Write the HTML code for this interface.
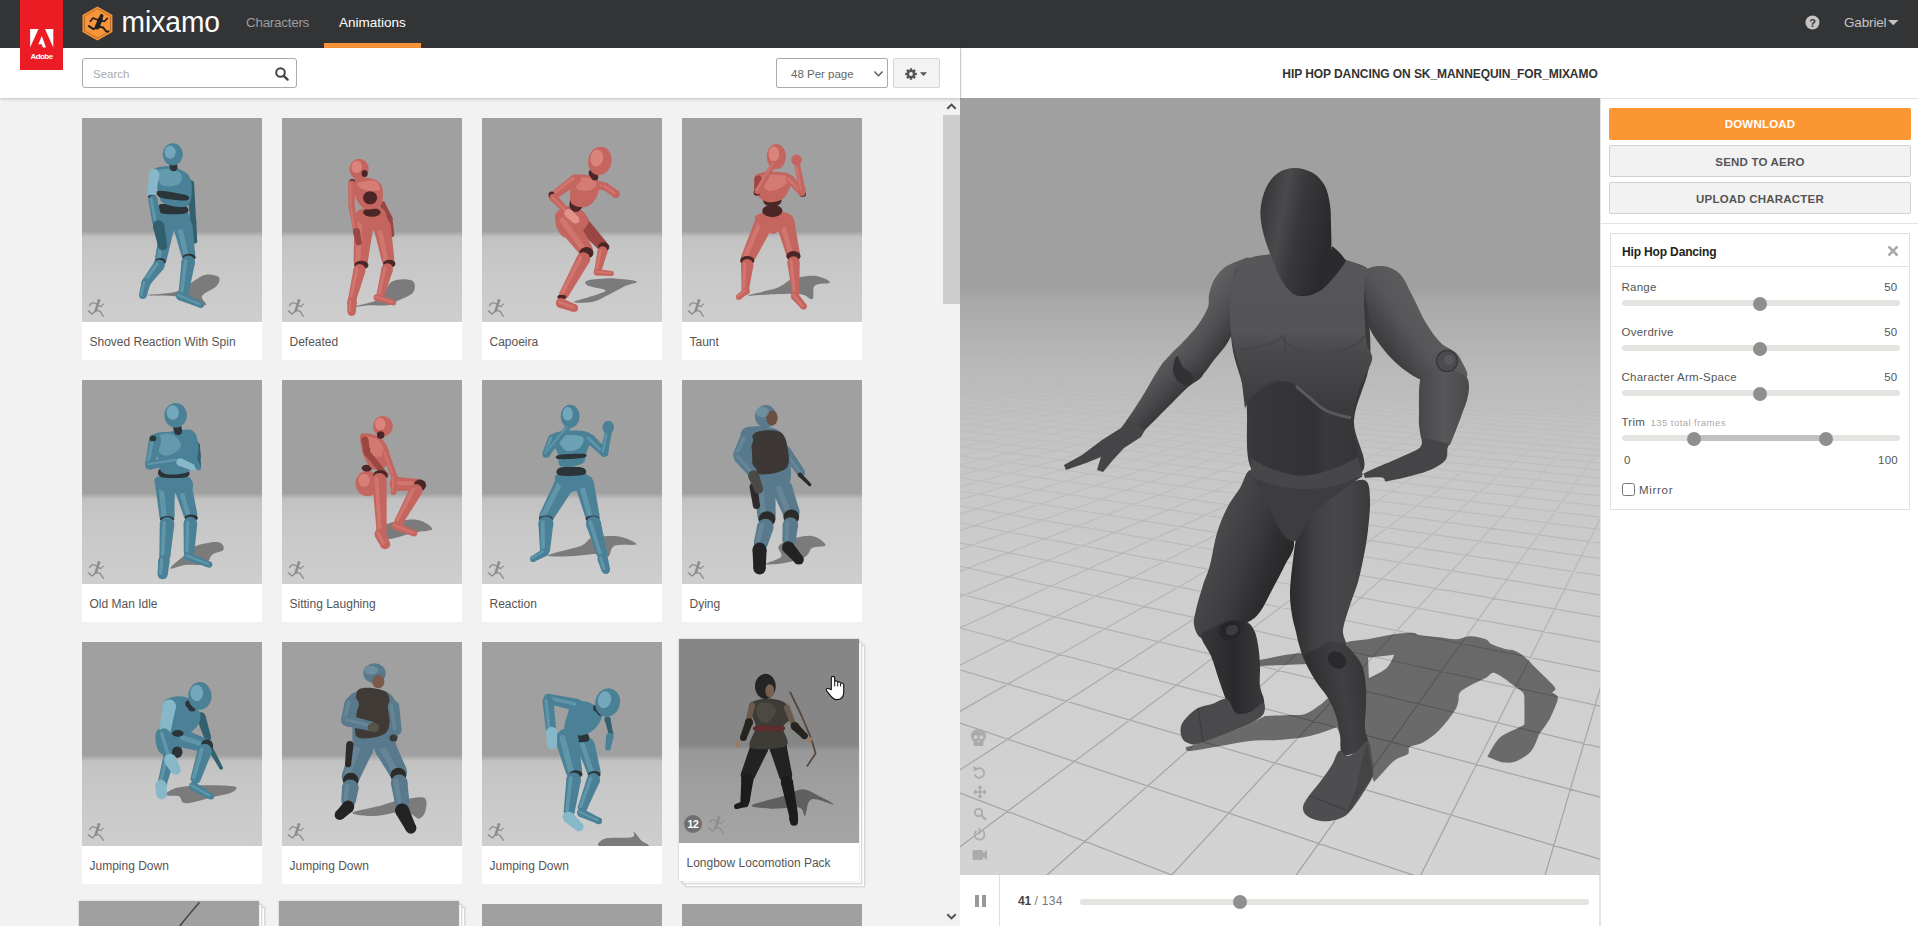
<!DOCTYPE html>
<html lang="en">
<head>
<meta charset="utf-8">
<title>Mixamo</title>
<style>
*{box-sizing:border-box;margin:0;padding:0}
html,body{width:1918px;height:926px;overflow:hidden;background:#f2f2f2;font-family:"Liberation Sans",sans-serif;color:#555}
.abs{position:absolute}
#hdr{position:absolute;left:0;top:0;width:1918px;height:48px;background:#333436}
#adobe{position:absolute;left:20px;top:0;width:43px;height:70px;background:#ec1c24;z-index:5}
#adobe span{position:absolute;left:0;width:43px;top:51.500px;text-align:center;color:#fff;font-weight:bold;font-size:8px;letter-spacing:-.55px;line-height:10px}
.nav{position:absolute;top:15px;font-size:13.5px;line-height:16px;color:#9b9b9b;white-space:nowrap}
#toolbarL{position:absolute;left:0;top:48px;width:960px;height:50px;background:#fff;box-shadow:0 1px 3px rgba(0,0,0,.22);z-index:3}
#toolbarR{position:absolute;left:960px;top:48px;width:958px;height:50px;background:#fff;border-left:1px solid #dcdcdc}
#search{position:absolute;left:82px;top:10px;width:215px;height:30px;border:1px solid #aaa;border-radius:3px;background:#fff}
#search span{position:absolute;left:10px;top:8.5px;font-size:11.5px;line-height:13px;color:#aaa}
#perpage{position:absolute;left:776px;top:10px;width:112px;height:30px;border:1px solid #a9a9a9;border-radius:2px;background:#fff}
#perpage span{position:absolute;left:14px;top:9px;font-size:11.5px;line-height:13px;color:#666}
#gear{position:absolute;left:893px;top:10px;width:47px;height:30px;border:1px solid #d4d4d4;border-radius:2px;background:#f3f3f3}
#title{position:absolute;left:0;top:19px;width:958px;text-align:center;font-weight:bold;font-size:12px;letter-spacing:-.07px;line-height:14px;color:#333;white-space:nowrap}
#left{position:absolute;left:0;top:98px;width:943px;height:828px;overflow:hidden;background:#f2f2f2}
#sb{position:absolute;left:943px;top:98px;width:17px;height:828px;background:#f1f1f1}
#sb i{position:absolute;left:0;top:17px;width:17px;height:189px;background:#cdcdcd}
.card{position:absolute;width:180px;height:242px;background:#fff}
.card .img{position:absolute;left:0;top:0;width:180px;height:204px;overflow:hidden;background:linear-gradient(#a0a0a0 0,#a0a0a0 55.5%,#c2c2c2 58.5%,#c7c7c7 70%,#cecece 100%)}
.card .lbl{position:absolute;left:7.5px;top:217px;font-size:12px;line-height:14px;color:#555;white-space:nowrap}
.card svg.fig{position:absolute;left:0;top:0;width:180px;height:204px}
.run{position:absolute;left:5px;top:180px;width:18px;height:19px}
.card.sheet{background:#fff;border:1px solid #d9d9d9;box-shadow:0 0 2px rgba(0,0,0,.15)}
.card.pk{box-shadow:0 0 2px rgba(0,0,0,.2)}
#viewer{position:absolute;left:960px;top:98px;width:640px;height:777px;overflow:hidden;background:#a0a0a0}
#play{position:absolute;left:960px;top:875px;width:640px;height:51px;background:#fff}
#side{position:absolute;left:1600px;top:98px;width:318px;height:828px;background:#fff;border-left:1px solid #e2e2e2}
.btn{position:absolute;left:8px;width:302px;height:32px;border-radius:2px;text-align:center;font-weight:bold;font-size:11.5px;line-height:32px;letter-spacing:.2px}
#panel{position:absolute;left:9px;top:135px;width:300px;height:277px;border:1px solid #e0e0e0;background:#fff}
.row{position:absolute;left:10.5px;width:276px;letter-spacing:.25px;white-space:nowrap;font-size:11.5px;line-height:14px;color:#555}
.row b{position:absolute;right:0;top:0;font-weight:normal}
.track{position:absolute;left:10.5px;width:278px;height:6px;border-radius:3px;background:#e3e3e0}
.knob{position:absolute;width:14px;height:14px;border-radius:50%;background:#8f8f8f}
</style>
</head>
<body>
<div id="hdr">
  <svg class="abs" style="left:80px;top:4px" width="36" height="40" viewBox="80 4 36 40">
    <polygon points="97.400,6.500 112.400,15.100 112.400,32 97.400,40.400 82.500,32 82.500,15.100" fill="#f7953a"/>
    <polygon points="97.400,8.700 110.500,16.200 110.500,30.900 97.400,38.200 84.400,30.900 84.400,16.200" fill="none" stroke="#a8601c" stroke-width=".8"/>
    <g stroke="#1f1f1f" fill="none" stroke-linecap="round" stroke-linejoin="round">
      <circle cx="101.600" cy="15.900" r="1.900" fill="#1f1f1f" stroke="none"/>
      <path d="M100.500 18.800L97.200 27" stroke-width="4.700"/>
      <path d="M98.800 20.200L93 18L90.400 21.300" stroke-width="1.700"/>
      <path d="M100.800 20.400L104.300 21.500L107.300 18.400" stroke-width="1.700"/>
      <path d="M97 27.200L93.500 29.200L88.900 26.100" stroke-width="2"/>
      <path d="M97.800 26.600L103.200 27.600L106.300 31.500L108.500 31.500" stroke-width="2"/>
    </g>
  </svg>
  <svg class="abs" style="left:118px;top:2px" width="110" height="40"><text x="3.5" y="30" font-family="Liberation Sans, sans-serif" font-size="30" fill="#fff" textLength="98.5" lengthAdjust="spacingAndGlyphs">mixamo</text></svg>
  <div class="nav" style="left:246px;letter-spacing:-.3px">Characters</div>
  <div class="nav" style="left:339px;color:#fff">Animations</div>
  <div class="abs" style="left:324px;top:43px;width:97px;height:5px;background:#f7943a"></div>
  <div class="nav" style="left:1844px;color:#c4c4c4;letter-spacing:-.15px">Gabriel</div>
  <svg class="abs" style="left:1805px;top:15px" width="15" height="15" viewBox="0 0 15 15"><circle cx="7.5" cy="7.5" r="7" fill="#c4c4c4"/><text x="7.5" y="11.600" font-family="Liberation Sans, sans-serif" font-weight="bold" font-size="11" text-anchor="middle" fill="#333436">?</text></svg>
  <svg class="abs" style="left:1888px;top:20px" width="11" height="6" viewBox="0 0 11 6"><path d="M0 0h10.500l-5.250 5.300z" fill="#c4c4c4"/></svg>

</div>
<div id="adobe"><svg class="abs" style="left:0;top:0" width="43" height="70" viewBox="20 0 43 70"><g fill="#fff"><polygon points="30.100,28.900 38.500,28.900 30.100,47.600"/><polygon points="45,28.900 53.300,28.900 53.300,47.600"/><polygon points="41.800,36.100 46,47.600 42.900,47.600 41.600,44.200 38.300,44.200"/></g></svg><span>Adobe</span></div>

<div id="toolbarL">
  <div id="search"><span>Search</span><svg class="abs" style="left:191px;top:7px" width="16" height="16" viewBox="0 0 16 16"><circle cx="6.500" cy="6.500" r="4.300" fill="none" stroke="#444" stroke-width="2"/><path d="M9.800 9.800L13.600 13.600" stroke="#444" stroke-width="2.400" stroke-linecap="round"/></svg></div>
  <div id="perpage"><span>48 Per page</span><svg class="abs" style="left:96px;top:11px" width="11" height="8" viewBox="0 0 11 8"><path d="M1.500 1.500L5.500 5.800L9.500 1.500" fill="none" stroke="#555" stroke-width="1.300"/></svg></div>
  <div id="gear"><svg class="abs" style="left:11px;top:9px" width="24" height="12" viewBox="0 0 24 12"><g transform="translate(6 6)"><g fill="#555"><circle r="4.200"/><g id="gt"><rect x="-1.200" y="-5.800" width="2.400" height="11.600" rx=".4"/></g><rect x="-1.200" y="-5.800" width="2.400" height="11.600" rx=".4" transform="rotate(45)"/><rect x="-1.200" y="-5.800" width="2.400" height="11.600" rx=".4" transform="rotate(90)"/><rect x="-1.200" y="-5.800" width="2.400" height="11.600" rx=".4" transform="rotate(135)"/></g><circle r="1.900" fill="#f3f3f3"/></g><path d="M15 4.200h7l-3.500 3.800z" fill="#555"/></svg></div>
</div>
<div id="toolbarR"><div id="title">HIP HOP DANCING ON SK_MANNEQUIN_FOR_MIXAMO</div></div>

<div id="left">
<div class="card" style="left:82px;top:20px"><div class="img"><svg class="fig" viewBox="0 0 817 926"><path d="M290 805C287 801 385 800 420 790C455 780 477 758 500 745C523 732 540 716 560 712C580 708 611 714 620 722C629 730 624 748 612 762C600 776 554 793 545 808C536 823 578 849 560 850C542 851 485 820 440 812C395 804 293 809 290 805Z" fill="#7b7b7b" /><path d="M475 301L492 471L518 469L509 299Z" fill="#33606f"/><circle cx="492" cy="300" r="17" fill="#33606f"/><circle cx="505" cy="470" r="13" fill="#33606f"/><path d="M491 471L501 561L523 559L519 469Z" fill="#33606f"/><circle cx="505" cy="470" r="14" fill="#33606f"/><circle cx="512" cy="560" r="11" fill="#33606f"/><path d="M356 484L332 635L384 645L420 496Z" fill="#4a8196"/><circle cx="388" cy="490" r="33" fill="#4a8196"/><circle cx="358" cy="640" r="26" fill="#4a8196"/><path d="M375 483L348 635" stroke="#86b8ca" stroke-width="18" stroke-linecap="round" opacity=".38" fill="none"/><ellipse cx="355" cy="652" rx="26" ry="16" fill="#2b3439"/><path d="M329 652L276 733L308 757L371 684Z" fill="#4a8196"/><circle cx="350" cy="668" r="26" fill="#4a8196"/><circle cx="292" cy="745" r="21" fill="#4a8196"/><path d="M340 663L284 741" stroke="#86b8ca" stroke-width="14" stroke-linecap="round" opacity=".38" fill="none"/><path d="M270 745L259 801L293 809L310 755Z" fill="#4a8196"/><circle cx="290" cy="750" r="21" fill="#4a8196"/><circle cx="276" cy="805" r="17" fill="#4a8196"/><path d="M282 746L269 802" stroke="#86b8ca" stroke-width="11" stroke-linecap="round" opacity=".38" fill="none"/><path d="M415 500L451 624L513 612L501 484Z" fill="#4a8196"/><circle cx="458" cy="492" r="43" fill="#4a8196"/><circle cx="482" cy="618" r="32" fill="#4a8196"/><path d="M441 483L469 612" stroke="#86b8ca" stroke-width="23" stroke-linecap="round" opacity=".38" fill="none"/><ellipse cx="486" cy="632" rx="30" ry="16" fill="#2b3439"/><path d="M452 650L439 787L485 793L512 660Z" fill="#4a8196"/><circle cx="482" cy="655" r="31" fill="#4a8196"/><circle cx="462" cy="790" r="23" fill="#4a8196"/><path d="M470 649L453 785" stroke="#86b8ca" stroke-width="16" stroke-linecap="round" opacity=".38" fill="none"/><path d="M437 826L535 861L545 835L453 790Z" fill="#4a8196"/><circle cx="445" cy="808" r="19" fill="#4a8196"/><circle cx="540" cy="848" r="14" fill="#4a8196"/><path d="M437 804L535 845" stroke="#86b8ca" stroke-width="10" stroke-linecap="round" opacity=".38" fill="none"/><path d="M360 425C378 415 451 416 472 425C493 434 496 466 488 480C480 494 446 511 425 512C404 513 376 500 365 485C354 470 342 435 360 425Z" fill="#4a8196" /><path d="M356 392C374 386 448 391 467 398C486 405 490 426 472 432C454 438 379 439 360 432C341 425 338 398 356 392Z" fill="#2b3439" /><path d="M325 232C337 222 376 217 400 220C424 223 456 236 472 248C488 260 492 271 496 292C500 313 500 353 494 372C488 391 483 402 462 404C441 406 387 398 368 386C349 374 352 349 346 332C340 315 334 299 330 282C326 265 313 242 325 232Z" fill="#4a8196" /><path d="M345 240C353 230 382 230 400 232C418 234 443 244 450 255C457 266 452 291 440 300C428 309 395 312 380 310C365 308 356 302 350 290C344 278 337 250 345 240Z" fill="#86b8ca" opacity=".45"/><path d="M350 330C369 328 452 343 472 350C492 357 491 372 472 374C453 376 378 369 358 362C338 355 331 332 350 330Z" fill="#2b3439" /><path d="M396 208L399 228L433 222L430 202Z" fill="#2b3439"/><circle cx="413" cy="205" r="17" fill="#2b3439"/><circle cx="416" cy="225" r="17" fill="#2b3439"/><ellipse cx="412" cy="165" rx="46" ry="50" fill="#4a8196"/><ellipse cx="400" cy="155" rx="25" ry="30" fill="#86b8ca" opacity=".7"/><path d="M305 252L297 342L335 348L351 258Z" fill="#86b8ca"/><circle cx="328" cy="255" r="23" fill="#86b8ca"/><circle cx="316" cy="345" r="19" fill="#86b8ca"/><ellipse cx="318" cy="358" rx="18" ry="10" fill="#2b3439"/><path d="M302 376L318 472L362 464L342 368Z" fill="#4a8196"/><circle cx="322" cy="372" r="21" fill="#4a8196"/><circle cx="340" cy="468" r="23" fill="#4a8196"/><path d="M314 368L331 463" stroke="#86b8ca" stroke-width="13" stroke-linecap="round" opacity=".38" fill="none"/><path d="M322 495L346 584L386 576L374 485Z" fill="#33606f"/><circle cx="348" cy="490" r="26" fill="#33606f"/><circle cx="366" cy="580" r="21" fill="#33606f"/></svg><svg class="run" viewBox="5 180 18 19"><g stroke="#8e8e8e" fill="none" stroke-linecap="round" stroke-linejoin="round"><circle cx="16.800" cy="182.800" r="1.700" fill="#8e8e8e" stroke="none"/><path d="M16.200 184.900L13.800 192.600" stroke-width="2.700"/><path d="M14.700 185.800L10.200 184.500L7.500 187.500" stroke-width="1.200"/><path d="M16.200 187.200L18.800 188.600L21.400 186.100" stroke-width="1.200"/><path d="M13.700 192.600L10.400 196L6.300 192.900" stroke-width="1.400"/><path d="M14.500 192.400L18.100 193.400L21.300 198.200" stroke-width="1.400"/></g></svg></div><div class="lbl">Shoved Reaction With Spin</div></div>
<div class="card" style="left:282px;top:20px"><div class="img"><svg class="fig" viewBox="0 0 817 926"><path d="M335 855C342 850 412 841 440 822C468 803 475 756 500 742C525 728 574 730 590 738C606 746 607 776 595 792C583 808 539 822 520 832C501 842 500 847 480 850C460 853 424 849 400 850C376 851 328 860 335 855Z" fill="#7b7b7b" /><path d="M443 399L480 461L500 449L467 385Z" fill="#9a4643"/><circle cx="455" cy="392" r="14" fill="#9a4643"/><circle cx="490" cy="455" r="11" fill="#9a4643"/><path d="M479 457L490 531L510 529L501 453Z" fill="#9a4643"/><circle cx="490" cy="455" r="11" fill="#9a4643"/><circle cx="500" cy="530" r="10" fill="#9a4643"/><path d="M416 502L454 653L510 643L494 488Z" fill="#c5655f"/><circle cx="455" cy="495" r="40" fill="#c5655f"/><circle cx="482" cy="648" r="28" fill="#c5655f"/><path d="M439 487L471 642" stroke="#e39288" stroke-width="21" stroke-linecap="round" opacity=".38" fill="none"/><ellipse cx="487" cy="662" rx="28" ry="18" fill="#4b2626"/><path d="M453 678L430 795L466 805L503 692Z" fill="#c5655f"/><circle cx="478" cy="685" r="26" fill="#c5655f"/><circle cx="448" cy="800" r="18" fill="#c5655f"/><path d="M468 680L441 796" stroke="#e39288" stroke-width="13" stroke-linecap="round" opacity=".38" fill="none"/><path d="M427 830L501 850L509 826L437 800Z" fill="#c5655f"/><circle cx="432" cy="815" r="16" fill="#c5655f"/><circle cx="505" cy="838" r="13" fill="#c5655f"/><path d="M426 812L500 835" stroke="#e39288" stroke-width="9" stroke-linecap="round" opacity=".38" fill="none"/><path d="M328 476L325 649L389 655L416 484Z" fill="#c5655f"/><circle cx="372" cy="480" r="44" fill="#c5655f"/><circle cx="357" cy="652" r="32" fill="#c5655f"/><path d="M354 471L344 646" stroke="#e39288" stroke-width="23" stroke-linecap="round" opacity=".38" fill="none"/><ellipse cx="360" cy="668" rx="32" ry="20" fill="#4b2626"/><path d="M325 683L300 821L336 829L379 697Z" fill="#c5655f"/><circle cx="352" cy="690" r="27" fill="#c5655f"/><circle cx="318" cy="825" r="18" fill="#c5655f"/><path d="M341 685L311 821" stroke="#e39288" stroke-width="14" stroke-linecap="round" opacity=".38" fill="none"/><path d="M296 834L297 879L335 881L340 836Z" fill="#c5655f"/><circle cx="318" cy="835" r="22" fill="#c5655f"/><circle cx="316" cy="880" r="19" fill="#c5655f"/><path d="M309 831L308 876" stroke="#e39288" stroke-width="12" stroke-linecap="round" opacity=".38" fill="none"/><path d="M345 420C362 410 430 402 452 410C474 418 476 453 474 470C472 487 452 509 440 514C428 519 415 509 400 502C385 495 357 484 348 470C339 456 328 430 345 420Z" fill="#c5655f" /><ellipse cx="408" cy="428" rx="40" ry="20" fill="#4b2626"/><path d="M318 282C330 272 378 270 400 273C422 276 438 286 448 300C458 314 459 343 458 360C457 377 455 395 442 404C429 413 396 418 380 414C364 410 352 394 343 380C334 366 332 346 328 330C324 314 306 292 318 282Z" fill="#c5655f" /><ellipse cx="400" cy="362" rx="32" ry="30" fill="#4b2626"/><path d="M345 295C355 289 403 280 420 285C437 290 448 318 445 325C442 332 414 331 400 330C386 329 369 326 360 320C351 314 335 301 345 295Z" fill="#e39288" opacity=".55"/><ellipse cx="350" cy="232" rx="44" ry="47" fill="#c5655f"/><ellipse cx="339" cy="222" rx="24" ry="28" fill="#e39288" opacity=".7"/><ellipse cx="375" cy="252" rx="14" ry="16" fill="#4b2626"/><ellipse cx="318" cy="292" rx="13" ry="15" fill="#4b2626"/><path d="M300 300L302 400L330 400L332 300Z" fill="#c5655f"/><circle cx="316" cy="300" r="16" fill="#c5655f"/><circle cx="316" cy="400" r="14" fill="#c5655f"/><path d="M310 297L311 397" stroke="#e39288" stroke-width="9" stroke-linecap="round" opacity=".38" fill="none"/><path d="M304 412L321 502L343 498L332 408Z" fill="#c5655f"/><circle cx="318" cy="410" r="14" fill="#c5655f"/><circle cx="332" cy="500" r="11" fill="#c5655f"/><path d="M313 407L327 498" stroke="#e39288" stroke-width="8" stroke-linecap="round" opacity=".38" fill="none"/><path d="M322 518L336 567L360 563L354 512Z" fill="#9a4643"/><circle cx="338" cy="515" r="16" fill="#9a4643"/><circle cx="348" cy="565" r="13" fill="#9a4643"/></svg><svg class="run" viewBox="5 180 18 19"><g stroke="#8e8e8e" fill="none" stroke-linecap="round" stroke-linejoin="round"><circle cx="16.800" cy="182.800" r="1.700" fill="#8e8e8e" stroke="none"/><path d="M16.200 184.900L13.800 192.600" stroke-width="2.700"/><path d="M14.700 185.800L10.200 184.500L7.500 187.500" stroke-width="1.200"/><path d="M16.200 187.200L18.800 188.600L21.400 186.100" stroke-width="1.200"/><path d="M13.700 192.600L10.400 196L6.300 192.900" stroke-width="1.400"/><path d="M14.500 192.400L18.100 193.400L21.300 198.200" stroke-width="1.400"/></g></svg></div><div class="lbl">Defeated</div></div>
<div class="card" style="left:482px;top:20px"><div class="img"><svg class="fig" viewBox="0 0 817 926"><path d="M415 835C418 830 496 811 520 802C544 793 566 789 560 782C554 775 495 769 482 762C469 755 460 744 480 738C500 732 563 727 600 728C637 729 693 736 702 742C711 748 673 752 652 762C631 772 600 790 575 802C550 814 527 830 500 835C473 840 412 840 415 835Z" fill="#7b7b7b" /><path d="M420 493L527 595L563 561L470 447Z" fill="#9a4643"/><circle cx="445" cy="470" r="34" fill="#9a4643"/><circle cx="545" cy="578" r="25" fill="#9a4643"/><ellipse cx="552" cy="586" rx="26" ry="22" fill="#4b2626"/><path d="M525 600L511 684L543 692L569 610Z" fill="#c5655f"/><circle cx="547" cy="605" r="23" fill="#c5655f"/><circle cx="527" cy="688" r="16" fill="#c5655f"/><path d="M538 600L521 685" stroke="#e39288" stroke-width="12" stroke-linecap="round" opacity=".38" fill="none"/><path d="M521 715L587 717L589 695L523 685Z" fill="#c5655f"/><circle cx="522" cy="700" r="15" fill="#c5655f"/><circle cx="588" cy="706" r="11" fill="#c5655f"/><path d="M516 697L583 704" stroke="#e39288" stroke-width="8" stroke-linecap="round" opacity=".38" fill="none"/><path d="M505 320L556 329L564 295L515 280Z" fill="#c5655f"/><circle cx="510" cy="300" r="21" fill="#c5655f"/><circle cx="560" cy="312" r="17" fill="#c5655f"/><path d="M502 296L553 309" stroke="#e39288" stroke-width="11" stroke-linecap="round" opacity=".38" fill="none"/><path d="M550 326L598 360L618 330L570 298Z" fill="#c5655f"/><circle cx="560" cy="312" r="17" fill="#c5655f"/><circle cx="608" cy="345" r="18" fill="#c5655f"/><path d="M553 309L601 341" stroke="#e39288" stroke-width="11" stroke-linecap="round" opacity=".38" fill="none"/><path d="M336 432C346 415 380 400 400 398C420 396 440 408 454 420C468 432 486 453 484 470C482 487 459 512 442 524C425 536 397 548 380 544C363 540 348 519 341 500C334 481 326 449 336 432Z" fill="#c5655f" /><path d="M345 503L443 617L497 579L425 447Z" fill="#c5655f"/><circle cx="385" cy="475" r="49" fill="#c5655f"/><circle cx="470" cy="598" r="33" fill="#c5655f"/><path d="M365 465L457 591" stroke="#e39288" stroke-width="25" stroke-linecap="round" opacity=".38" fill="none"/><ellipse cx="474" cy="612" rx="32" ry="26" fill="#4b2626"/><path d="M433 625L353 790L391 810L487 655Z" fill="#c5655f"/><circle cx="460" cy="640" r="31" fill="#c5655f"/><circle cx="372" cy="800" r="22" fill="#c5655f"/><path d="M448 634L363 796" stroke="#e39288" stroke-width="16" stroke-linecap="round" opacity=".38" fill="none"/><ellipse cx="362" cy="812" rx="20" ry="10" fill="#4b2626"/><path d="M350 861L412 879L424 845L366 819Z" fill="#c5655f"/><circle cx="358" cy="840" r="23" fill="#c5655f"/><circle cx="418" cy="862" r="18" fill="#c5655f"/><path d="M349 835L411 858" stroke="#e39288" stroke-width="12" stroke-linecap="round" opacity=".38" fill="none"/><ellipse cx="430" cy="385" rx="32" ry="42" fill="#4b2626" transform="rotate(20 430 385)"/><path d="M428 260C443 255 482 257 500 264C518 271 532 282 534 300C536 318 525 353 514 370C503 387 487 400 470 404C453 408 422 403 410 392C398 381 400 357 400 340C400 323 405 305 410 292C415 279 413 265 428 260Z" fill="#c5655f" /><path d="M440 272C452 265 487 270 500 276C513 282 523 296 520 305C517 314 495 328 480 330C465 332 437 330 430 320C423 310 428 279 440 272Z" fill="#e39288" opacity=".5"/><path d="M487 259L499 277L525 259L513 241Z" fill="#4b2626"/><circle cx="500" cy="250" r="16" fill="#4b2626"/><circle cx="512" cy="268" r="16" fill="#4b2626"/><ellipse cx="535" cy="195" rx="53" ry="65" fill="#c5655f" transform="rotate(10 535 195)"/><ellipse cx="521" cy="182" rx="29" ry="39" fill="#e39288" transform="rotate(10 521 182)" opacity=".7"/><path d="M411 259L311 340L333 370L439 297Z" fill="#c5655f"/><circle cx="425" cy="278" r="24" fill="#c5655f"/><circle cx="322" cy="355" r="18" fill="#c5655f"/><path d="M415 273L315 351" stroke="#e39288" stroke-width="13" stroke-linecap="round" opacity=".38" fill="none"/><ellipse cx="316" cy="350" rx="14" ry="16" fill="#4b2626"/><path d="M311 375L372 430L392 410L337 349Z" fill="#c5655f"/><circle cx="324" cy="362" r="18" fill="#c5655f"/><circle cx="382" cy="420" r="15" fill="#c5655f"/><path d="M317 358L376 417" stroke="#e39288" stroke-width="10" stroke-linecap="round" opacity=".38" fill="none"/><path d="M379 446L413 475L437 449L405 418Z" fill="#e39288"/><circle cx="392" cy="432" r="19" fill="#e39288"/><circle cx="425" cy="462" r="17" fill="#e39288"/></svg><svg class="run" viewBox="5 180 18 19"><g stroke="#8e8e8e" fill="none" stroke-linecap="round" stroke-linejoin="round"><circle cx="16.800" cy="182.800" r="1.700" fill="#8e8e8e" stroke="none"/><path d="M16.200 184.900L13.800 192.600" stroke-width="2.700"/><path d="M14.700 185.800L10.200 184.500L7.500 187.500" stroke-width="1.200"/><path d="M16.200 187.200L18.800 188.600L21.400 186.100" stroke-width="1.200"/><path d="M13.700 192.600L10.400 196L6.300 192.900" stroke-width="1.400"/><path d="M14.500 192.400L18.100 193.400L21.300 198.200" stroke-width="1.400"/></g></svg></div><div class="lbl">Capoeira</div></div>
<div class="card" style="left:682px;top:20px"><div class="img"><svg class="fig" viewBox="0 0 817 926"><path d="M300 805C302 800 397 784 430 772C463 760 472 741 500 732C528 723 571 714 600 716C629 718 672 738 672 746C672 754 615 749 602 762C589 775 602 816 592 822C582 828 569 804 540 800C511 796 460 799 420 800C380 801 298 810 300 805Z" fill="#7b7b7b" /><path d="M336 454L269 627L325 653L414 490Z" fill="#c5655f"/><circle cx="375" cy="472" r="43" fill="#c5655f"/><circle cx="297" cy="640" r="31" fill="#c5655f"/><path d="M358 463L285 634" stroke="#e39288" stroke-width="22" stroke-linecap="round" opacity=".38" fill="none"/><ellipse cx="296" cy="648" rx="32" ry="22" fill="#4b2626"/><path d="M268 666L270 777L304 779L324 670Z" fill="#c5655f"/><circle cx="296" cy="668" r="28" fill="#c5655f"/><circle cx="287" cy="778" r="17" fill="#c5655f"/><path d="M285 662L280 775" stroke="#e39288" stroke-width="14" stroke-linecap="round" opacity=".38" fill="none"/><path d="M282 773L250 802L266 822L302 797Z" fill="#c5655f"/><circle cx="292" cy="785" r="16" fill="#c5655f"/><circle cx="258" cy="812" r="13" fill="#c5655f"/><path d="M286 782L253 809" stroke="#e39288" stroke-width="9" stroke-linecap="round" opacity=".38" fill="none"/><path d="M427 482L475 627L535 613L509 462Z" fill="#c5655f"/><circle cx="468" cy="472" r="42" fill="#c5655f"/><circle cx="505" cy="620" r="31" fill="#c5655f"/><path d="M451 464L493 614" stroke="#e39288" stroke-width="22" stroke-linecap="round" opacity=".38" fill="none"/><ellipse cx="506" cy="628" rx="32" ry="24" fill="#4b2626"/><path d="M478 657L499 789L533 787L534 653Z" fill="#c5655f"/><circle cx="506" cy="655" r="28" fill="#c5655f"/><circle cx="516" cy="788" r="17" fill="#c5655f"/><path d="M495 649L509 785" stroke="#e39288" stroke-width="14" stroke-linecap="round" opacity=".38" fill="none"/><path d="M498 820L541 865L563 845L526 796Z" fill="#c5655f"/><circle cx="512" cy="808" r="18" fill="#c5655f"/><circle cx="552" cy="855" r="15" fill="#c5655f"/><path d="M505 804L546 852" stroke="#e39288" stroke-width="10" stroke-linecap="round" opacity=".38" fill="none"/><path d="M340 440C361 432 448 425 472 430C496 435 494 454 486 470C478 486 438 517 422 524C406 531 403 521 390 514C377 507 354 492 346 480C338 468 319 448 340 440Z" fill="#c5655f" /><ellipse cx="410" cy="422" rx="46" ry="28" fill="#4b2626"/><ellipse cx="410" cy="375" rx="42" ry="28" fill="#4b2626"/><path d="M332 262C345 244 392 244 420 244C448 244 487 248 498 262C509 276 492 312 484 330C476 348 467 361 452 370C437 379 410 385 392 382C374 379 353 370 343 350C333 330 319 280 332 262Z" fill="#c5655f" /><path d="M350 270C355 258 398 258 420 258C442 258 473 261 480 270C487 279 475 300 460 310C445 320 408 337 390 330C372 323 345 282 350 270Z" fill="#e39288" opacity=".5"/><ellipse cx="340" cy="338" rx="15" ry="15" fill="#4b2626"/><ellipse cx="548" cy="345" rx="15" ry="13" fill="#4b2626"/><ellipse cx="428" cy="175" rx="44" ry="57" fill="#c5655f"/><ellipse cx="417" cy="163" rx="24" ry="34" fill="#e39288" opacity=".7"/><path d="M329 277L327 331L357 333L363 279Z" fill="#9a4643"/><circle cx="346" cy="278" r="17" fill="#9a4643"/><circle cx="342" cy="332" r="15" fill="#9a4643"/><path d="M358 337L428 211L408 199L332 323Z" fill="#c5655f"/><circle cx="345" cy="330" r="15" fill="#c5655f"/><circle cx="418" cy="205" r="11" fill="#c5655f"/><path d="M339 327L413 203" stroke="#e39288" stroke-width="8" stroke-linecap="round" opacity=".38" fill="none"/><path d="M476 291L533 349L557 327L504 265Z" fill="#c5655f"/><circle cx="490" cy="278" r="19" fill="#c5655f"/><circle cx="545" cy="338" r="16" fill="#c5655f"/><path d="M482 274L539 335" stroke="#e39288" stroke-width="11" stroke-linecap="round" opacity=".38" fill="none"/><path d="M561 327L536 213L512 217L529 333Z" fill="#c5655f"/><circle cx="545" cy="330" r="16" fill="#c5655f"/><circle cx="524" cy="215" r="13" fill="#c5655f"/><path d="M539 327L519 212" stroke="#e39288" stroke-width="9" stroke-linecap="round" opacity=".38" fill="none"/><ellipse cx="520" cy="190" rx="24" ry="24" fill="#c5655f"/></svg><svg class="run" viewBox="5 180 18 19"><g stroke="#8e8e8e" fill="none" stroke-linecap="round" stroke-linejoin="round"><circle cx="16.800" cy="182.800" r="1.700" fill="#8e8e8e" stroke="none"/><path d="M16.200 184.900L13.800 192.600" stroke-width="2.700"/><path d="M14.700 185.800L10.200 184.500L7.500 187.500" stroke-width="1.200"/><path d="M16.200 187.200L18.800 188.600L21.400 186.100" stroke-width="1.200"/><path d="M13.700 192.600L10.400 196L6.300 192.900" stroke-width="1.400"/><path d="M14.500 192.400L18.100 193.400L21.300 198.200" stroke-width="1.400"/></g></svg></div><div class="lbl">Taunt</div></div>
<div class="card" style="left:82px;top:282px"><div class="img"><svg class="fig" viewBox="0 0 817 926"><path d="M400 855C400 847 450 809 470 792C490 775 495 761 520 752C545 743 600 733 620 736C640 739 647 761 642 770C637 779 606 781 592 792C578 803 580 827 560 835C540 843 497 837 470 840C443 843 400 863 400 855Z" fill="#7b7b7b" /><path d="M495 303L505 348L539 342L535 297Z" fill="#33606f"/><circle cx="515" cy="300" r="21" fill="#33606f"/><circle cx="522" cy="345" r="17" fill="#33606f"/><path d="M506 346L512 391L540 389L538 344Z" fill="#33606f"/><circle cx="522" cy="345" r="16" fill="#33606f"/><circle cx="526" cy="390" r="14" fill="#33606f"/><path d="M333 485L352 622L420 618L421 479Z" fill="#4a8196"/><circle cx="377" cy="482" r="44" fill="#4a8196"/><circle cx="386" cy="620" r="34" fill="#4a8196"/><path d="M359 473L372 613" stroke="#86b8ca" stroke-width="24" stroke-linecap="round" opacity=".38" fill="none"/><ellipse cx="386" cy="632" rx="32" ry="15" fill="#2b3439"/><path d="M353 653L351 796L401 800L419 657Z" fill="#4a8196"/><circle cx="386" cy="655" r="33" fill="#4a8196"/><circle cx="376" cy="798" r="25" fill="#4a8196"/><path d="M373 648L366 793" stroke="#86b8ca" stroke-width="17" stroke-linecap="round" opacity=".38" fill="none"/><path d="M346 817L343 880L389 884L398 823Z" fill="#4a8196"/><circle cx="372" cy="820" r="26" fill="#4a8196"/><circle cx="366" cy="882" r="23" fill="#4a8196"/><path d="M362 815L357 877" stroke="#86b8ca" stroke-width="15" stroke-linecap="round" opacity=".38" fill="none"/><path d="M421 502L462 618L522 602L499 482Z" fill="#4a8196"/><circle cx="460" cy="492" r="40" fill="#4a8196"/><circle cx="492" cy="610" r="31" fill="#4a8196"/><path d="M444 484L480 604" stroke="#86b8ca" stroke-width="21" stroke-linecap="round" opacity=".38" fill="none"/><ellipse cx="496" cy="626" rx="30" ry="15" fill="#2b3439"/><path d="M461 651L462 779L510 781L523 653Z" fill="#4a8196"/><circle cx="492" cy="652" r="31" fill="#4a8196"/><circle cx="486" cy="780" r="24" fill="#4a8196"/><path d="M480 646L476 775" stroke="#86b8ca" stroke-width="16" stroke-linecap="round" opacity=".38" fill="none"/><path d="M473 817L573 851L583 825L487 783Z" fill="#4a8196"/><circle cx="480" cy="800" r="18" fill="#4a8196"/><circle cx="578" cy="838" r="14" fill="#4a8196"/><path d="M473 796L573 835" stroke="#86b8ca" stroke-width="10" stroke-linecap="round" opacity=".38" fill="none"/><path d="M340 440C363 431 456 430 482 440C508 450 508 488 498 500C488 512 445 515 420 514C395 513 359 504 346 492C333 480 317 449 340 440Z" fill="#4a8196" /><path d="M360 400C379 394 453 398 472 405C491 412 495 434 476 440C457 446 377 447 358 440C339 433 341 406 360 400Z" fill="#2b3439" /><path d="M322 252C333 233 380 238 410 234C440 230 482 219 502 230C522 241 526 275 528 300C530 325 524 360 514 380C504 400 494 415 470 422C446 429 389 434 368 422C347 410 351 378 343 350C335 322 311 271 322 252Z" fill="#4a8196" /><path d="M340 258C350 244 392 239 410 246C428 253 452 284 450 300C448 316 416 335 400 340C384 345 362 344 352 330C342 316 330 272 340 258Z" fill="#86b8ca" opacity=".45"/><path d="M414 216L418 236L454 228L450 208Z" fill="#2b3439"/><circle cx="432" cy="212" r="18" fill="#2b3439"/><circle cx="436" cy="232" r="18" fill="#2b3439"/><ellipse cx="425" cy="160" rx="51" ry="56" fill="#4a8196"/><ellipse cx="412" cy="148" rx="28" ry="33" fill="#86b8ca" opacity=".7"/><path d="M305 266L287 378L329 388L359 278Z" fill="#4a8196"/><circle cx="332" cy="272" r="27" fill="#4a8196"/><circle cx="308" cy="383" r="22" fill="#4a8196"/><path d="M321 267L299 379" stroke="#86b8ca" stroke-width="15" stroke-linecap="round" opacity=".38" fill="none"/><ellipse cx="322" cy="265" rx="15" ry="13" fill="#2b3439"/><path d="M311 406L431 382L425 350L305 366Z" fill="#4a8196"/><circle cx="308" cy="386" r="21" fill="#4a8196"/><circle cx="428" cy="366" r="16" fill="#4a8196"/><path d="M300 382L422 363" stroke="#86b8ca" stroke-width="11" stroke-linecap="round" opacity=".38" fill="none"/><path d="M438 388L494 410L506 382L452 356Z" fill="#86b8ca"/><circle cx="445" cy="372" r="17" fill="#86b8ca"/><circle cx="500" cy="396" r="15" fill="#86b8ca"/><path d="M493 356L520 405L540 395L517 344Z" fill="#4a8196"/><circle cx="505" cy="350" r="14" fill="#4a8196"/><circle cx="530" cy="400" r="11" fill="#4a8196"/></svg><svg class="run" viewBox="5 180 18 19"><g stroke="#8e8e8e" fill="none" stroke-linecap="round" stroke-linejoin="round"><circle cx="16.800" cy="182.800" r="1.700" fill="#8e8e8e" stroke="none"/><path d="M16.200 184.900L13.800 192.600" stroke-width="2.700"/><path d="M14.700 185.800L10.200 184.500L7.500 187.500" stroke-width="1.200"/><path d="M16.200 187.200L18.800 188.600L21.400 186.100" stroke-width="1.200"/><path d="M13.700 192.600L10.400 196L6.300 192.900" stroke-width="1.400"/><path d="M14.500 192.400L18.100 193.400L21.300 198.200" stroke-width="1.400"/></g></svg></div><div class="lbl">Old Man Idle</div></div>
<div class="card" style="left:282px;top:282px"><div class="img"><svg class="fig" viewBox="0 0 817 926"><path d="M480 652C505 643 576 630 610 634C644 638 683 666 682 676C681 686 635 684 602 692C569 700 506 722 482 722C458 722 460 702 460 690C460 678 455 661 480 652Z" fill="#7b7b7b" /><path d="M519 504L619 503L621 449L521 440Z" fill="#c5655f"/><circle cx="520" cy="472" r="32" fill="#c5655f"/><circle cx="620" cy="476" r="27" fill="#c5655f"/><path d="M507 466L609 471" stroke="#e39288" stroke-width="18" stroke-linecap="round" opacity=".38" fill="none"/><ellipse cx="626" cy="478" rx="28" ry="26" fill="#4b2626"/><path d="M582 488L514 630L550 650L634 516Z" fill="#c5655f"/><circle cx="608" cy="502" r="30" fill="#c5655f"/><circle cx="532" cy="640" r="21" fill="#c5655f"/><path d="M596 496L524 636" stroke="#e39288" stroke-width="15" stroke-linecap="round" opacity=".38" fill="none"/><path d="M508 679L595 709L605 683L522 645Z" fill="#c5655f"/><circle cx="515" cy="662" r="18" fill="#c5655f"/><circle cx="600" cy="696" r="14" fill="#c5655f"/><path d="M508 658L595 693" stroke="#e39288" stroke-width="10" stroke-linecap="round" opacity=".38" fill="none"/><ellipse cx="388" cy="470" rx="54" ry="58" fill="#c5655f"/><ellipse cx="372" cy="455" rx="26" ry="30" fill="#e39288" opacity=".6"/><ellipse cx="385" cy="400" rx="24" ry="15" fill="#4b2626"/><path d="M362 244C376 238 420 245 440 258C460 271 479 298 484 320C489 342 484 376 472 390C460 404 428 411 412 404C396 397 382 369 373 350C364 331 360 310 358 292C356 274 348 250 362 244Z" fill="#c5655f" /><path d="M385 262C392 254 427 264 440 275C453 286 467 318 465 330C463 342 442 352 430 350C418 348 402 335 395 320C388 305 378 270 385 262Z" fill="#e39288" opacity=".45"/><ellipse cx="385" cy="320" rx="15" ry="17" fill="#4b2626"/><ellipse cx="458" cy="210" rx="45" ry="47" fill="#c5655f"/><ellipse cx="446" cy="200" rx="24" ry="28" fill="#e39288" opacity=".7"/><ellipse cx="448" cy="250" rx="17" ry="17" fill="#4b2626"/><path d="M360 275L373 332L399 328L392 269Z" fill="#9a4643"/><circle cx="376" cy="272" r="16" fill="#9a4643"/><circle cx="386" cy="330" r="14" fill="#9a4643"/><path d="M375 339L460 440L480 424L397 321Z" fill="#9a4643"/><circle cx="386" cy="330" r="14" fill="#9a4643"/><circle cx="470" cy="432" r="13" fill="#9a4643"/><path d="M455 338L497 445L523 435L485 326Z" fill="#c5655f"/><circle cx="470" cy="332" r="16" fill="#c5655f"/><circle cx="510" cy="440" r="14" fill="#c5655f"/><path d="M464 329L505 437" stroke="#e39288" stroke-width="9" stroke-linecap="round" opacity=".38" fill="none"/><path d="M496 439L493 507L519 509L524 441Z" fill="#c5655f"/><circle cx="510" cy="440" r="14" fill="#c5655f"/><circle cx="506" cy="508" r="13" fill="#c5655f"/><path d="M505 437L501 505" stroke="#e39288" stroke-width="8" stroke-linecap="round" opacity=".38" fill="none"/><ellipse cx="446" cy="432" rx="32" ry="24" fill="#4b2626"/><path d="M409 456L429 681L475 679L475 454Z" fill="#c5655f"/><circle cx="442" cy="455" r="33" fill="#c5655f"/><circle cx="452" cy="680" r="23" fill="#c5655f"/><path d="M429 448L443 675" stroke="#e39288" stroke-width="17" stroke-linecap="round" opacity=".38" fill="none"/><path d="M422 712L448 755L488 735L470 688Z" fill="#c5655f"/><circle cx="446" cy="700" r="26" fill="#c5655f"/><circle cx="468" cy="745" r="23" fill="#c5655f"/><path d="M436 695L459 740" stroke="#e39288" stroke-width="15" stroke-linecap="round" opacity=".38" fill="none"/></svg><svg class="run" viewBox="5 180 18 19"><g stroke="#8e8e8e" fill="none" stroke-linecap="round" stroke-linejoin="round"><circle cx="16.800" cy="182.800" r="1.700" fill="#8e8e8e" stroke="none"/><path d="M16.200 184.900L13.800 192.600" stroke-width="2.700"/><path d="M14.700 185.800L10.200 184.500L7.500 187.500" stroke-width="1.200"/><path d="M16.200 187.200L18.800 188.600L21.400 186.100" stroke-width="1.200"/><path d="M13.700 192.600L10.400 196L6.300 192.900" stroke-width="1.400"/><path d="M14.500 192.400L18.100 193.400L21.300 198.200" stroke-width="1.400"/></g></svg></div><div class="lbl">Sitting Laughing</div></div>
<div class="card" style="left:482px;top:282px"><div class="img"><svg class="fig" viewBox="0 0 817 926"><path d="M300 795C308 787 417 765 450 752C483 739 472 723 500 716C528 709 586 705 620 710C654 715 705 739 702 746C699 753 624 743 602 752C580 761 586 796 572 802C558 808 549 790 520 790C491 790 437 799 400 800C363 801 292 803 300 795Z" fill="#7b7b7b" /><path d="M335 450L263 604L321 636L415 494Z" fill="#4a8196"/><circle cx="375" cy="472" r="46" fill="#4a8196"/><circle cx="292" cy="620" r="33" fill="#4a8196"/><path d="M357 463L279 613" stroke="#86b8ca" stroke-width="24" stroke-linecap="round" opacity=".38" fill="none"/><ellipse cx="290" cy="630" rx="32" ry="15" fill="#2b3439"/><path d="M256 651L263 769L309 771L324 653Z" fill="#4a8196"/><circle cx="290" cy="652" r="34" fill="#4a8196"/><circle cx="286" cy="770" r="23" fill="#4a8196"/><path d="M276 645L277 765" stroke="#86b8ca" stroke-width="17" stroke-linecap="round" opacity=".38" fill="none"/><path d="M276 766L225 800L239 824L294 798Z" fill="#4a8196"/><circle cx="285" cy="782" r="18" fill="#4a8196"/><circle cx="232" cy="812" r="14" fill="#4a8196"/><path d="M278 778L227 809" stroke="#86b8ca" stroke-width="10" stroke-linecap="round" opacity=".38" fill="none"/><path d="M423 483L471 628L533 612L507 461Z" fill="#4a8196"/><circle cx="465" cy="472" r="43" fill="#4a8196"/><circle cx="502" cy="620" r="32" fill="#4a8196"/><path d="M448 463L489 614" stroke="#86b8ca" stroke-width="23" stroke-linecap="round" opacity=".38" fill="none"/><ellipse cx="502" cy="630" rx="32" ry="15" fill="#2b3439"/><path d="M473 661L522 797L568 783L539 643Z" fill="#4a8196"/><circle cx="506" cy="652" r="34" fill="#4a8196"/><circle cx="545" cy="790" r="24" fill="#4a8196"/><path d="M492 645L535 785" stroke="#86b8ca" stroke-width="17" stroke-linecap="round" opacity=".38" fill="none"/><path d="M525 818L543 867L581 857L571 806Z" fill="#4a8196"/><circle cx="548" cy="812" r="24" fill="#4a8196"/><circle cx="562" cy="862" r="19" fill="#4a8196"/><path d="M538 807L554 858" stroke="#86b8ca" stroke-width="13" stroke-linecap="round" opacity=".38" fill="none"/><path d="M340 430C360 422 443 418 467 425C491 432 494 457 486 470C478 483 438 498 422 504C406 510 403 510 390 504C377 498 354 482 346 470C338 458 320 438 340 430Z" fill="#4a8196" /><path d="M353 398C371 392 439 393 457 398C475 403 480 424 462 430C444 436 368 437 350 432C332 427 335 404 353 398Z" fill="#2b3439" /><path d="M312 252C322 235 370 231 400 230C430 229 482 229 494 246C506 263 481 308 474 330C467 352 473 370 454 380C435 390 376 400 358 392C340 384 351 353 343 330C335 307 302 269 312 252Z" fill="#4a8196" /><path d="M345 262C348 250 381 250 400 250C419 250 453 252 460 262C467 272 453 300 440 310C427 320 396 328 380 320C364 312 342 274 345 262Z" fill="#86b8ca" opacity=".6"/><path d="M348 340C367 336 443 333 462 335C481 337 479 349 460 353C441 357 369 361 350 359C331 357 329 344 348 340Z" fill="#2b3439" /><ellipse cx="400" cy="165" rx="43" ry="53" fill="#4a8196"/><ellipse cx="389" cy="154" rx="23" ry="31" fill="#86b8ca" opacity=".7"/><path d="M301 259L275 328L309 342L343 277Z" fill="#4a8196"/><circle cx="322" cy="268" r="23" fill="#4a8196"/><circle cx="292" cy="335" r="18" fill="#4a8196"/><path d="M313 263L285 331" stroke="#86b8ca" stroke-width="12" stroke-linecap="round" opacity=".38" fill="none"/><path d="M304 345L398 226L378 210L280 325Z" fill="#4a8196"/><circle cx="292" cy="335" r="16" fill="#4a8196"/><circle cx="388" cy="218" r="13" fill="#4a8196"/><path d="M286 332L383 215" stroke="#86b8ca" stroke-width="9" stroke-linecap="round" opacity=".38" fill="none"/><path d="M474 284L542 343L568 317L506 252Z" fill="#4a8196"/><circle cx="490" cy="268" r="23" fill="#4a8196"/><circle cx="555" cy="330" r="18" fill="#4a8196"/><path d="M481 263L548 326" stroke="#86b8ca" stroke-width="12" stroke-linecap="round" opacity=".38" fill="none"/><path d="M573 333L589 235L559 229L537 327Z" fill="#4a8196"/><circle cx="555" cy="330" r="18" fill="#4a8196"/><circle cx="574" cy="232" r="15" fill="#4a8196"/><path d="M548 326L568 229" stroke="#86b8ca" stroke-width="10" stroke-linecap="round" opacity=".38" fill="none"/><ellipse cx="573" cy="215" rx="26" ry="30" fill="#4a8196"/></svg><svg class="run" viewBox="5 180 18 19"><g stroke="#8e8e8e" fill="none" stroke-linecap="round" stroke-linejoin="round"><circle cx="16.800" cy="182.800" r="1.700" fill="#8e8e8e" stroke="none"/><path d="M16.200 184.900L13.800 192.600" stroke-width="2.700"/><path d="M14.700 185.800L10.200 184.500L7.500 187.500" stroke-width="1.200"/><path d="M16.200 187.200L18.800 188.600L21.400 186.100" stroke-width="1.200"/><path d="M13.700 192.600L10.400 196L6.300 192.900" stroke-width="1.400"/><path d="M14.500 192.400L18.100 193.400L21.300 198.200" stroke-width="1.400"/></g></svg></div><div class="lbl">Reaction</div></div>
<div class="card" style="left:682px;top:282px"><div class="img"><svg class="fig" viewBox="0 0 817 926"><path d="M380 835C377 830 440 816 450 802C460 788 428 766 440 752C452 738 493 723 520 716C547 709 578 704 600 710C622 716 653 741 652 750C651 759 607 753 592 762C577 771 580 791 560 802C540 813 500 824 470 830C440 836 383 840 380 835Z" fill="#7b7b7b" /><path d="M451 336L525 431L555 409L489 308Z" fill="#587a8c"/><circle cx="470" cy="322" r="24" fill="#587a8c"/><circle cx="540" cy="420" r="18" fill="#587a8c"/><path d="M460 317L533 416" stroke="#7d9cab" stroke-width="13" stroke-linecap="round" opacity=".38" fill="none"/><path d="M528 437L575 480L585 470L542 423Z" fill="#2d2b2a"/><circle cx="535" cy="430" r="10" fill="#2d2b2a"/><circle cx="580" cy="475" r="7" fill="#2d2b2a"/><path d="M326 485L343 623L425 617L424 479Z" fill="#587a8c"/><circle cx="375" cy="482" r="49" fill="#587a8c"/><circle cx="384" cy="620" r="41" fill="#587a8c"/><path d="M355 472L368 612" stroke="#7d9cab" stroke-width="27" stroke-linecap="round" opacity=".38" fill="none"/><ellipse cx="386" cy="632" rx="38" ry="36" fill="#2d2b2a"/><path d="M342 658L327 731L389 749L414 678Z" fill="#587a8c"/><circle cx="378" cy="668" r="38" fill="#587a8c"/><circle cx="358" cy="740" r="32" fill="#587a8c"/><path d="M363 660L345 734" stroke="#7d9cab" stroke-width="21" stroke-linecap="round" opacity=".38" fill="none"/><path d="M320 770L324 855L380 855L384 770Z" fill="#232323"/><circle cx="352" cy="770" r="32" fill="#232323"/><circle cx="352" cy="855" r="28" fill="#232323"/><path d="M412 508L459 613L531 587L498 476Z" fill="#587a8c"/><circle cx="455" cy="492" r="46" fill="#587a8c"/><circle cx="495" cy="600" r="39" fill="#587a8c"/><path d="M437 483L479 592" stroke="#7d9cab" stroke-width="25" stroke-linecap="round" opacity=".38" fill="none"/><ellipse cx="496" cy="622" rx="36" ry="34" fill="#2d2b2a"/><path d="M457 655L456 725L516 731L527 661Z" fill="#587a8c"/><circle cx="492" cy="658" r="35" fill="#587a8c"/><circle cx="486" cy="728" r="30" fill="#587a8c"/><path d="M478 651L474 722" stroke="#7d9cab" stroke-width="19" stroke-linecap="round" opacity=".38" fill="none"/><path d="M461 779L513 830L547 800L503 741Z" fill="#232323"/><circle cx="482" cy="760" r="28" fill="#232323"/><circle cx="530" cy="815" r="23" fill="#232323"/><path d="M266 242C273 210 311 212 340 210C369 208 418 217 440 230C462 243 465 262 474 290C483 318 494 369 494 400C494 431 500 462 474 474C448 486 367 486 338 474C309 462 310 439 298 400C286 361 259 274 266 242Z" fill="#587a8c" /><path d="M328 242C348 226 415 224 440 234C465 244 473 272 478 300C483 328 495 381 472 402C449 423 366 436 340 424C314 412 320 360 318 330C316 300 308 258 328 242Z" fill="#3d3835" /><path d="M307 488L322 572L354 568L343 482Z" fill="#2d2b2a"/><circle cx="325" cy="485" r="18" fill="#2d2b2a"/><circle cx="338" cy="570" r="16" fill="#2d2b2a"/><ellipse cx="380" cy="165" rx="49" ry="51" fill="#587a8c"/><ellipse cx="408" cy="172" rx="26" ry="34" fill="#6a4f42"/><ellipse cx="365" cy="145" rx="30" ry="24" fill="#7d9cab" opacity=".6"/><path d="M264 258L235 328L281 352L320 286Z" fill="#587a8c"/><circle cx="292" cy="272" r="31" fill="#587a8c"/><circle cx="258" cy="340" r="26" fill="#587a8c"/><path d="M280 266L248 335" stroke="#7d9cab" stroke-width="17" stroke-linecap="round" opacity=".38" fill="none"/><path d="M242 369L301 433L335 403L282 335Z" fill="#587a8c"/><circle cx="262" cy="352" r="26" fill="#587a8c"/><circle cx="318" cy="418" r="23" fill="#587a8c"/><path d="M252 347L309 413" stroke="#7d9cab" stroke-width="15" stroke-linecap="round" opacity=".38" fill="none"/><path d="M302 444L329 502L367 488L348 426Z" fill="#4a4a48"/><circle cx="325" cy="435" r="25" fill="#4a4a48"/><circle cx="348" cy="495" r="21" fill="#4a4a48"/></svg><svg class="run" viewBox="5 180 18 19"><g stroke="#8e8e8e" fill="none" stroke-linecap="round" stroke-linejoin="round"><circle cx="16.800" cy="182.800" r="1.700" fill="#8e8e8e" stroke="none"/><path d="M16.200 184.900L13.800 192.600" stroke-width="2.700"/><path d="M14.700 185.800L10.200 184.500L7.500 187.500" stroke-width="1.200"/><path d="M16.200 187.200L18.800 188.600L21.400 186.100" stroke-width="1.200"/><path d="M13.700 192.600L10.400 196L6.300 192.900" stroke-width="1.400"/><path d="M14.500 192.400L18.100 193.400L21.300 198.200" stroke-width="1.400"/></g></svg></div><div class="lbl">Dying</div></div>
<div class="card" style="left:82px;top:544px"><div class="img"><svg class="fig" viewBox="0 0 817 926"><path d="M380 695C378 689 400 670 430 662C460 654 516 651 560 650C604 649 672 651 692 656C712 661 697 674 682 682C667 690 637 694 602 702C567 710 499 732 472 732C445 732 455 706 440 700C425 694 382 701 380 695Z" fill="#7b7b7b" /><path d="M520 346L555 437L585 427L560 334Z" fill="#33606f"/><circle cx="540" cy="340" r="21" fill="#33606f"/><circle cx="570" cy="432" r="16" fill="#33606f"/><path d="M567 481L625 576L639 568L589 469Z" fill="#33606f"/><circle cx="578" cy="475" r="13" fill="#33606f"/><circle cx="632" cy="572" r="8" fill="#33606f"/><path d="M458 480L551 500L569 440L482 404Z" fill="#4a8196"/><circle cx="470" cy="442" r="40" fill="#4a8196"/><circle cx="560" cy="470" r="32" fill="#4a8196"/><path d="M454 434L547 464" stroke="#86b8ca" stroke-width="22" stroke-linecap="round" opacity=".38" fill="none"/><ellipse cx="567" cy="470" rx="28" ry="28" fill="#2b3439"/><path d="M526 485L494 613L538 627L588 505Z" fill="#4a8196"/><circle cx="557" cy="495" r="33" fill="#4a8196"/><circle cx="516" cy="620" r="23" fill="#4a8196"/><path d="M544 488L507 615" stroke="#86b8ca" stroke-width="17" stroke-linecap="round" opacity=".38" fill="none"/><path d="M495 672L578 713L592 687L515 638Z" fill="#4a8196"/><circle cx="505" cy="655" r="19" fill="#4a8196"/><circle cx="585" cy="700" r="15" fill="#4a8196"/><path d="M497 651L579 697" stroke="#86b8ca" stroke-width="10" stroke-linecap="round" opacity=".38" fill="none"/><path d="M340 402C353 386 403 385 422 398C441 411 456 459 454 480C452 501 430 522 412 524C394 526 358 512 346 492C334 472 327 418 340 402Z" fill="#4a8196" /><path d="M370 515L342 645L382 655L422 529Z" fill="#4a8196"/><circle cx="396" cy="522" r="27" fill="#4a8196"/><circle cx="362" cy="650" r="21" fill="#4a8196"/><path d="M385 517L354 646" stroke="#86b8ca" stroke-width="14" stroke-linecap="round" opacity=".38" fill="none"/><path d="M333 652L338 692L386 688L383 648Z" fill="#86b8ca"/><circle cx="358" cy="650" r="25" fill="#86b8ca"/><circle cx="362" cy="690" r="24" fill="#86b8ca"/><path d="M378 264C396 249 444 241 470 250C496 259 525 298 534 320C543 342 536 363 524 380C512 397 484 420 462 424C440 428 406 418 390 404C374 390 366 363 364 340C362 317 360 279 378 264Z" fill="#4a8196" /><ellipse cx="435" cy="415" rx="26" ry="15" fill="#2b3439"/><path d="M472 290L487 310L513 290L498 270Z" fill="#2b3439"/><circle cx="485" cy="280" r="16" fill="#2b3439"/><circle cx="500" cy="300" r="16" fill="#2b3439"/><ellipse cx="535" cy="245" rx="53" ry="63" fill="#4a8196"/><ellipse cx="521" cy="232" rx="29" ry="37" fill="#86b8ca" opacity=".7"/><path d="M366 287L353 394L403 402L426 297Z" fill="#86b8ca"/><circle cx="396" cy="292" r="31" fill="#86b8ca"/><circle cx="378" cy="398" r="25" fill="#86b8ca"/><path d="M345 428L378 527L426 513L399 412Z" fill="#4a8196"/><circle cx="372" cy="420" r="28" fill="#4a8196"/><circle cx="402" cy="520" r="25" fill="#4a8196"/><path d="M361 414L392 515" stroke="#86b8ca" stroke-width="16" stroke-linecap="round" opacity=".38" fill="none"/><ellipse cx="432" cy="500" rx="24" ry="26" fill="#2b3439"/><path d="M375 549L405 591L445 569L425 521Z" fill="#86b8ca"/><circle cx="400" cy="535" r="28" fill="#86b8ca"/><circle cx="425" cy="580" r="23" fill="#86b8ca"/></svg><svg class="run" viewBox="5 180 18 19"><g stroke="#8e8e8e" fill="none" stroke-linecap="round" stroke-linejoin="round"><circle cx="16.800" cy="182.800" r="1.700" fill="#8e8e8e" stroke="none"/><path d="M16.200 184.900L13.800 192.600" stroke-width="2.700"/><path d="M14.700 185.800L10.200 184.500L7.500 187.500" stroke-width="1.200"/><path d="M16.200 187.200L18.800 188.600L21.400 186.100" stroke-width="1.200"/><path d="M13.700 192.600L10.400 196L6.300 192.900" stroke-width="1.400"/><path d="M14.500 192.400L18.100 193.400L21.300 198.200" stroke-width="1.400"/></g></svg></div><div class="lbl">Jumping Down</div></div>
<div class="card" style="left:282px;top:544px"><div class="img"><svg class="fig" viewBox="0 0 817 926"><path d="M320 775C325 767 417 751 450 742C483 733 488 728 520 722C552 716 620 699 642 706C664 713 655 746 652 762C649 778 637 801 622 802C607 803 594 772 560 770C526 768 460 789 420 790C380 791 315 783 320 775Z" fill="#7b7b7b" /><path d="M319 463L274 594L350 626L411 501Z" fill="#587a8c"/><circle cx="365" cy="482" r="50" fill="#587a8c"/><circle cx="312" cy="610" r="41" fill="#587a8c"/><path d="M345 472L296 602" stroke="#7d9cab" stroke-width="27" stroke-linecap="round" opacity=".38" fill="none"/><ellipse cx="312" cy="628" rx="36" ry="34" fill="#2d2b2a"/><path d="M273 657L269 715L335 725L347 667Z" fill="#587a8c"/><circle cx="310" cy="662" r="38" fill="#587a8c"/><circle cx="302" cy="720" r="33" fill="#587a8c"/><path d="M295 654L289 713" stroke="#7d9cab" stroke-width="21" stroke-linecap="round" opacity=".38" fill="none"/><path d="M280 728L246 769L278 801L320 768Z" fill="#232323"/><circle cx="300" cy="748" r="28" fill="#232323"/><circle cx="262" cy="785" r="23" fill="#232323"/><path d="M426 505L491 609L563 571L514 459Z" fill="#587a8c"/><circle cx="470" cy="482" r="50" fill="#587a8c"/><circle cx="527" cy="590" r="41" fill="#587a8c"/><path d="M450 472L511 582" stroke="#7d9cab" stroke-width="27" stroke-linecap="round" opacity=".38" fill="none"/><ellipse cx="528" cy="605" rx="36" ry="34" fill="#2d2b2a"/><path d="M495 645L512 733L578 723L569 635Z" fill="#587a8c"/><circle cx="532" cy="640" r="38" fill="#587a8c"/><circle cx="545" cy="728" r="33" fill="#587a8c"/><path d="M517 632L532 721" stroke="#7d9cab" stroke-width="21" stroke-linecap="round" opacity=".38" fill="none"/><path d="M516 779L563 856L607 834L574 751Z" fill="#232323"/><circle cx="545" cy="765" r="32" fill="#232323"/><circle cx="585" cy="845" r="25" fill="#232323"/><path d="M296 262C305 234 341 220 370 214C399 208 445 213 470 224C495 235 508 251 518 280C528 309 532 368 528 400C524 432 526 462 494 474C462 486 367 490 338 474C309 458 325 415 318 380C311 345 287 290 296 262Z" fill="#587a8c" /><path d="M348 216C370 199 447 212 470 226C493 240 488 269 488 300C488 331 496 390 472 412C448 434 365 446 343 432C321 418 337 366 338 330C339 294 326 233 348 216Z" fill="#3f3a36" /><path d="M292 464L286 554L314 556L324 466Z" fill="#2d2b2a"/><circle cx="308" cy="465" r="16" fill="#2d2b2a"/><circle cx="300" cy="555" r="14" fill="#2d2b2a"/><ellipse cx="420" cy="142" rx="51" ry="45" fill="#587a8c"/><ellipse cx="437" cy="180" rx="28" ry="30" fill="#7a5a4a"/><ellipse cx="405" cy="128" rx="30" ry="20" fill="#7d9cab" opacity=".6"/><path d="M284 273L269 347L323 363L348 291Z" fill="#587a8c"/><circle cx="316" cy="282" r="33" fill="#587a8c"/><circle cx="296" cy="355" r="28" fill="#587a8c"/><path d="M303 275L285 349" stroke="#7d9cab" stroke-width="18" stroke-linecap="round" opacity=".38" fill="none"/><path d="M296 383L395 403L405 361L308 333Z" fill="#587a8c"/><circle cx="302" cy="358" r="26" fill="#587a8c"/><circle cx="400" cy="382" r="22" fill="#587a8c"/><path d="M292 353L391 378" stroke="#7d9cab" stroke-width="14" stroke-linecap="round" opacity=".38" fill="none"/><ellipse cx="415" cy="388" rx="26" ry="22" fill="#55554a"/><path d="M480 295L497 403L543 397L532 289Z" fill="#587a8c"/><circle cx="506" cy="292" r="26" fill="#587a8c"/><circle cx="520" cy="400" r="23" fill="#587a8c"/><path d="M496 287L511 395" stroke="#7d9cab" stroke-width="15" stroke-linecap="round" opacity=".38" fill="none"/><ellipse cx="506" cy="436" rx="18" ry="16" fill="#3a3a38"/></svg><svg class="run" viewBox="5 180 18 19"><g stroke="#8e8e8e" fill="none" stroke-linecap="round" stroke-linejoin="round"><circle cx="16.800" cy="182.800" r="1.700" fill="#8e8e8e" stroke="none"/><path d="M16.200 184.900L13.800 192.600" stroke-width="2.700"/><path d="M14.700 185.800L10.200 184.500L7.500 187.500" stroke-width="1.200"/><path d="M16.200 187.200L18.800 188.600L21.400 186.100" stroke-width="1.200"/><path d="M13.700 192.600L10.400 196L6.300 192.900" stroke-width="1.400"/><path d="M14.500 192.400L18.100 193.400L21.300 198.200" stroke-width="1.400"/></g></svg></div><div class="lbl">Jumping Down</div></div>
<div class="card" style="left:482px;top:544px"><div class="img"><svg class="fig" viewBox="0 0 817 926"><path d="M540 930C509 924 537 899 560 892C583 885 658 891 680 886C702 881 683 860 690 862C697 864 712 889 722 900C732 911 778 925 748 930C718 935 571 936 540 930Z" fill="#7b7b7b" /><path d="M557 355L576 422L596 418L583 349Z" fill="#33606f"/><circle cx="570" cy="352" r="14" fill="#33606f"/><circle cx="586" cy="420" r="10" fill="#33606f"/><path d="M563 427L560 478L584 482L597 433Z" fill="#4a8196"/><circle cx="580" cy="430" r="17" fill="#4a8196"/><circle cx="572" cy="480" r="13" fill="#4a8196"/><path d="M433 484L479 599L537 581L511 460Z" fill="#4a8196"/><circle cx="472" cy="472" r="41" fill="#4a8196"/><circle cx="508" cy="590" r="31" fill="#4a8196"/><path d="M456 464L496 584" stroke="#86b8ca" stroke-width="22" stroke-linecap="round" opacity=".38" fill="none"/><ellipse cx="510" cy="602" rx="28" ry="17" fill="#2b3439"/><path d="M478 614L437 742L477 758L534 636Z" fill="#4a8196"/><circle cx="506" cy="625" r="30" fill="#4a8196"/><circle cx="457" cy="750" r="22" fill="#4a8196"/><path d="M494 619L448 746" stroke="#86b8ca" stroke-width="15" stroke-linecap="round" opacity=".38" fill="none"/><path d="M442 793L524 825L536 799L458 757Z" fill="#4a8196"/><circle cx="450" cy="775" r="19" fill="#4a8196"/><circle cx="530" cy="812" r="15" fill="#4a8196"/><path d="M442 771L524 809" stroke="#86b8ca" stroke-width="10" stroke-linecap="round" opacity=".38" fill="none"/><path d="M378 402C394 396 455 404 472 412C489 420 494 446 478 452C462 458 395 456 378 448C361 440 362 408 378 402Z" fill="#2b3439" /><path d="M335 456L382 598L454 582L437 434Z" fill="#4a8196"/><circle cx="386" cy="445" r="52" fill="#4a8196"/><circle cx="418" cy="590" r="36" fill="#4a8196"/><path d="M365 435L403 583" stroke="#86b8ca" stroke-width="27" stroke-linecap="round" opacity=".38" fill="none"/><ellipse cx="426" cy="600" rx="30" ry="18" fill="#2b3439"/><path d="M383 620L371 765L421 771L449 630Z" fill="#4a8196"/><circle cx="416" cy="625" r="33" fill="#4a8196"/><circle cx="396" cy="768" r="25" fill="#4a8196"/><path d="M403 618L386 763" stroke="#86b8ca" stroke-width="17" stroke-linecap="round" opacity=".38" fill="none"/><path d="M375 815L426 853L454 823L409 775Z" fill="#86b8ca"/><circle cx="392" cy="795" r="26" fill="#86b8ca"/><circle cx="440" cy="838" r="21" fill="#86b8ca"/><path d="M418 270C437 262 479 270 500 280C521 290 542 311 544 330C546 349 529 376 514 392C499 408 475 422 452 424C429 426 389 420 378 404C367 388 381 352 388 330C395 308 399 278 418 270Z" fill="#4a8196" /><path d="M510 310L530 330L550 310L530 290Z" fill="#2b3439"/><circle cx="520" cy="300" r="15" fill="#2b3439"/><circle cx="540" cy="320" r="15" fill="#2b3439"/><ellipse cx="570" cy="275" rx="56" ry="65" fill="#4a8196" transform="rotate(15 570 275)"/><ellipse cx="556" cy="262" rx="30" ry="39" fill="#86b8ca" transform="rotate(15 556 262)" opacity=".7"/><path d="M438 259L307 236L297 280L426 313Z" fill="#4a8196"/><circle cx="432" cy="286" r="27" fill="#4a8196"/><circle cx="302" cy="258" r="23" fill="#4a8196"/><path d="M421 281L293 253" stroke="#86b8ca" stroke-width="15" stroke-linecap="round" opacity=".38" fill="none"/><ellipse cx="300" cy="262" rx="13" ry="15" fill="#2b3439"/><path d="M275 273L289 390L335 386L325 267Z" fill="#4a8196"/><circle cx="300" cy="270" r="25" fill="#4a8196"/><circle cx="312" cy="388" r="23" fill="#4a8196"/><path d="M290 265L303 383" stroke="#86b8ca" stroke-width="14" stroke-linecap="round" opacity=".38" fill="none"/><path d="M291 411L295 466L341 464L341 409Z" fill="#86b8ca"/><circle cx="316" cy="410" r="25" fill="#86b8ca"/><circle cx="318" cy="465" r="23" fill="#86b8ca"/></svg><svg class="run" viewBox="5 180 18 19"><g stroke="#8e8e8e" fill="none" stroke-linecap="round" stroke-linejoin="round"><circle cx="16.800" cy="182.800" r="1.700" fill="#8e8e8e" stroke="none"/><path d="M16.200 184.900L13.800 192.600" stroke-width="2.700"/><path d="M14.700 185.800L10.200 184.500L7.500 187.500" stroke-width="1.200"/><path d="M16.200 187.200L18.800 188.600L21.400 186.100" stroke-width="1.200"/><path d="M13.700 192.600L10.400 196L6.300 192.900" stroke-width="1.400"/><path d="M14.500 192.400L18.100 193.400L21.300 198.200" stroke-width="1.400"/></g></svg></div><div class="lbl">Jumping Down</div></div>
<div class="card sheet" style="left:685px;top:547px"></div><div class="card sheet" style="left:682px;top:544px"></div><div class="card pk" style="left:679px;top:541px"><div class="img" style="background:linear-gradient(#868686 0,#868686 52%,#989898 54.5%,#9e9e9e 70%,#a5a5a5 100%)"><svg class="fig" viewBox="0 0 817 926"><path d="M330 755C340 745 442 724 480 712C518 700 533 682 560 682C587 682 616 703 640 715C664 727 709 750 702 752C695 754 622 720 600 728C578 736 581 796 572 802C563 808 570 770 545 765C520 760 456 772 420 770C384 768 320 765 330 755Z" fill="#5f5f5f" /><path d="M505 242L555 345L600 452L620 520L582 576" stroke="#54463c" stroke-width="8" fill="none" stroke-linecap="round" stroke-linejoin="round"/><path d="M327 476L282 608L342 632L403 508Z" fill="#222222"/><circle cx="365" cy="492" r="41" fill="#222222"/><circle cx="312" cy="620" r="32" fill="#222222"/><path d="M283 637L279 733L321 737L337 643Z" fill="#1c1c1c"/><circle cx="310" cy="640" r="28" fill="#1c1c1c"/><circle cx="300" cy="735" r="21" fill="#1c1c1c"/><path d="M295 733L258 749L266 771L305 763Z" fill="#1c1c1c"/><circle cx="300" cy="748" r="16" fill="#1c1c1c"/><circle cx="262" cy="760" r="12" fill="#1c1c1c"/><path d="M412 502L455 628L513 612L488 482Z" fill="#222222"/><circle cx="450" cy="492" r="40" fill="#222222"/><circle cx="484" cy="620" r="30" fill="#222222"/><path d="M463 655L500 804L540 796L517 645Z" fill="#1c1c1c"/><circle cx="490" cy="650" r="28" fill="#1c1c1c"/><circle cx="520" cy="800" r="20" fill="#1c1c1c"/><path d="M500 814L504 832L540 828L540 810Z" fill="#1c1c1c"/><circle cx="520" cy="812" r="20" fill="#1c1c1c"/><circle cx="522" cy="830" r="18" fill="#1c1c1c"/><path d="M322 292C334 280 373 270 400 270C427 270 467 277 484 292C501 307 506 342 504 360C502 378 475 381 472 402C469 423 510 469 486 484C462 499 349 508 326 494C303 480 348 426 348 400C348 374 332 358 328 340C324 322 310 304 322 292Z" fill="#3d3c36" /><path d="M350 395C370 391 447 392 467 395C487 398 488 412 469 416C450 420 370 422 350 418C330 414 330 399 350 395Z" fill="#5e2c2c" /><path d="M355 300C363 288 396 285 410 290C424 295 442 315 440 330C438 345 413 375 400 380C387 385 368 373 360 360C352 347 347 312 355 300Z" fill="#55534a" opacity=".6"/><path d="M319 299L300 377L324 383L345 305Z" fill="#6d5a4c"/><circle cx="332" cy="302" r="14" fill="#6d5a4c"/><circle cx="312" cy="380" r="12" fill="#6d5a4c"/><path d="M301 372L278 443L306 453L335 384Z" fill="#26241f"/><circle cx="318" cy="378" r="18" fill="#26241f"/><circle cx="292" cy="448" r="15" fill="#26241f"/><ellipse cx="268" cy="478" rx="12" ry="14" fill="#9a7a64"/><path d="M477 317L509 394L531 386L503 307Z" fill="#6d5a4c"/><circle cx="490" cy="312" r="14" fill="#6d5a4c"/><circle cx="520" cy="390" r="12" fill="#6d5a4c"/><path d="M512 408L560 450L580 430L538 382Z" fill="#26241f"/><circle cx="525" cy="395" r="18" fill="#26241f"/><circle cx="570" cy="440" r="15" fill="#26241f"/><ellipse cx="592" cy="456" rx="12" ry="12" fill="#9a7a64"/><ellipse cx="392" cy="215" rx="47" ry="57" fill="#252525"/><ellipse cx="412" cy="235" rx="20" ry="30" fill="#7a5f50"/></svg><div class="abs" style="left:5px;top:176px;width:18px;height:18px;border-radius:50%;background:#6f6f6f;color:#fff;font-weight:bold;font-size:10.5px;line-height:18px;text-align:center;letter-spacing:-.3px">12</div><svg class="run" style="left:28px;top:176px" viewBox="5 180 18 19"><g stroke="#8e8e8e" fill="none" stroke-linecap="round" stroke-linejoin="round"><circle cx="16.800" cy="182.800" r="1.700" fill="#8e8e8e" stroke="none"/><path d="M16.200 184.900L13.800 192.600" stroke-width="2.700"/><path d="M14.700 185.800L10.200 184.500L7.500 187.500" stroke-width="1.200"/><path d="M16.200 187.200L18.800 188.600L21.400 186.100" stroke-width="1.200"/><path d="M13.700 192.600L10.400 196L6.300 192.900" stroke-width="1.400"/><path d="M14.500 192.400L18.100 193.400L21.300 198.200" stroke-width="1.400"/></g></svg></div><div class="lbl">Longbow Locomotion Pack</div></div>
<div class="card sheet" style="left:85px;top:809px"></div><div class="card sheet" style="left:82px;top:806px"></div><div class="card pk" style="left:79px;top:803px"><div class="img"><svg class="fig" viewBox="0 0 817 926"><path d="M452 120L505 55L545 8" stroke="#444444" stroke-width="7" fill="none" stroke-linecap="round" stroke-linejoin="round"/></svg><svg class="run" viewBox="5 180 18 19"><g stroke="#8e8e8e" fill="none" stroke-linecap="round" stroke-linejoin="round"><circle cx="16.800" cy="182.800" r="1.700" fill="#8e8e8e" stroke="none"/><path d="M16.200 184.900L13.800 192.600" stroke-width="2.700"/><path d="M14.700 185.800L10.200 184.500L7.500 187.500" stroke-width="1.200"/><path d="M16.200 187.200L18.800 188.600L21.400 186.100" stroke-width="1.200"/><path d="M13.700 192.600L10.400 196L6.300 192.900" stroke-width="1.400"/><path d="M14.500 192.400L18.100 193.400L21.300 198.200" stroke-width="1.400"/></g></svg></div></div>
<div class="card sheet" style="left:285px;top:809px"></div><div class="card sheet" style="left:282px;top:806px"></div><div class="card pk" style="left:279px;top:803px"><div class="img"><svg class="fig" viewBox="0 0 817 926"></svg><svg class="run" viewBox="5 180 18 19"><g stroke="#8e8e8e" fill="none" stroke-linecap="round" stroke-linejoin="round"><circle cx="16.800" cy="182.800" r="1.700" fill="#8e8e8e" stroke="none"/><path d="M16.200 184.900L13.800 192.600" stroke-width="2.700"/><path d="M14.700 185.800L10.200 184.500L7.500 187.500" stroke-width="1.200"/><path d="M16.200 187.200L18.800 188.600L21.400 186.100" stroke-width="1.200"/><path d="M13.700 192.600L10.400 196L6.300 192.900" stroke-width="1.400"/><path d="M14.500 192.400L18.100 193.400L21.300 198.200" stroke-width="1.400"/></g></svg></div></div>
<div class="card" style="left:482px;top:806px"><div class="img"><svg class="fig" viewBox="0 0 817 926"></svg><svg class="run" viewBox="5 180 18 19"><g stroke="#8e8e8e" fill="none" stroke-linecap="round" stroke-linejoin="round"><circle cx="16.800" cy="182.800" r="1.700" fill="#8e8e8e" stroke="none"/><path d="M16.200 184.900L13.800 192.600" stroke-width="2.700"/><path d="M14.700 185.800L10.200 184.500L7.500 187.500" stroke-width="1.200"/><path d="M16.200 187.200L18.800 188.600L21.400 186.100" stroke-width="1.200"/><path d="M13.700 192.600L10.400 196L6.300 192.900" stroke-width="1.400"/><path d="M14.500 192.400L18.100 193.400L21.300 198.200" stroke-width="1.400"/></g></svg></div></div>
<div class="card" style="left:682px;top:806px"><div class="img"><svg class="fig" viewBox="0 0 817 926"></svg><svg class="run" viewBox="5 180 18 19"><g stroke="#8e8e8e" fill="none" stroke-linecap="round" stroke-linejoin="round"><circle cx="16.800" cy="182.800" r="1.700" fill="#8e8e8e" stroke="none"/><path d="M16.200 184.900L13.800 192.600" stroke-width="2.700"/><path d="M14.700 185.800L10.200 184.500L7.500 187.500" stroke-width="1.200"/><path d="M16.200 187.200L18.800 188.600L21.400 186.100" stroke-width="1.200"/><path d="M13.700 192.600L10.400 196L6.300 192.900" stroke-width="1.400"/><path d="M14.500 192.400L18.100 193.400L21.300 198.200" stroke-width="1.400"/></g></svg></div></div>
<svg class="abs" style="left:824px;top:576px;z-index:9" width="22" height="28" viewBox="824 674 22 28"><path d="M831.300 689.800V677.900C831.300 675.800 834.700 675.800 834.700 677.900V681.300C835.600 680.600 837.400 680.900 837.700 682.200C838.600 681.600 840.300 682 840.600 683.300C841.800 682.700 843.700 683.300 843.700 685V692.200C843.700 697.500 840.500 699.600 836.500 699.600C833.500 699.600 831.800 697.500 829.600 694.600L826.700 690.800C825.400 689 827.500 687.400 829.100 688.800Z" fill="#fff" stroke="#111" stroke-width="1.100" stroke-linejoin="round"/><path d="M834.700 681.300V686.400M837.700 682.300V686.400M840.600 683.500V686.400" stroke="#111" stroke-width="1" fill="none"/></svg>
</div>
<div id="sb"><i></i><svg class="abs" style="left:3px;top:5px" width="11" height="7" viewBox="0 0 11 7"><path d="M1.300 5.800L5.500 1.600L9.700 5.800" fill="none" stroke="#505050" stroke-width="2"/></svg><svg class="abs" style="left:3px;top:815px" width="11" height="7" viewBox="0 0 11 7"><path d="M1.300 1.200L5.500 5.400L9.700 1.200" fill="none" stroke="#505050" stroke-width="2"/></svg></div>

<div id="viewer">
<svg class="abs" style="left:0;top:0" width="640" height="777" viewBox="960 98 640 777">
<defs>
<linearGradient id="bg" x1="0" y1="98" x2="0" y2="875" gradientUnits="userSpaceOnUse">
<stop offset="0.0000" stop-color="#a0a0a0"/><stop offset="0.2445" stop-color="#a0a0a0"/><stop offset="0.2625" stop-color="#a9a9a9"/><stop offset="0.2986" stop-color="#b0b0b0"/><stop offset="0.3436" stop-color="#bababa"/><stop offset="0.4144" stop-color="#c2c2c2"/><stop offset="0.4916" stop-color="#c8c8c8"/><stop offset="0.6461" stop-color="#cecece"/><stop offset="1.0000" stop-color="#d3d3d3"/></linearGradient>
<linearGradient id="fade" x1="0" y1="98" x2="0" y2="875" gradientUnits="userSpaceOnUse">
<stop offset="0.0000" stop-color="#fff" stop-opacity="0.00"/><stop offset="0.2986" stop-color="#fff" stop-opacity="0.00"/><stop offset="0.4144" stop-color="#fff" stop-opacity="0.10"/><stop offset="0.5174" stop-color="#fff" stop-opacity="0.28"/><stop offset="0.6461" stop-color="#fff" stop-opacity="0.55"/><stop offset="0.8005" stop-color="#fff" stop-opacity="0.85"/><stop offset="1.0000" stop-color="#fff" stop-opacity="1.00"/></linearGradient>
<mask id="gm" maskUnits="userSpaceOnUse" x="960" y="98" width="640" height="777"><rect x="960" y="98" width="640" height="777" fill="url(#fade)"/></mask>
</defs>
<rect x="960" y="98" width="640" height="777" fill="url(#bg)"/>
<path mask="url(#gm)" d="M1538.4 290.5L-7818.6 905.0M1541.1 290.5L-7677.8 905.0M1543.8 290.5L-7537.2 905.0M1546.5 290.5L-7396.8 905.0M1549.2 290.5L-7256.5 905.0M1551.9 290.5L-7116.3 905.0M1554.6 290.5L-6976.3 905.0M1557.2 290.5L-6836.5 905.0M1559.9 290.5L-6696.8 905.0M1562.6 290.5L-6557.3 905.0M1565.3 290.5L-6418.0 905.0M1567.9 290.5L-6278.8 905.0M1570.6 290.5L-6139.7 905.0M1573.2 290.5L-6000.8 905.0M1575.9 290.5L-5862.1 905.0M1578.6 290.5L-5723.5 905.0M1581.2 290.5L-5585.1 905.0M1583.9 290.5L-5446.8 905.0M1586.5 290.5L-5308.7 905.0M1589.1 290.5L-5170.8 905.0M1591.8 290.5L-5033.0 905.0M1594.4 290.5L-4895.3 905.0M1597.1 290.5L-4757.8 905.0M1599.7 290.5L-4620.5 905.0M1602.3 290.5L-4483.3 905.0M1604.9 290.5L-4346.2 905.0M1607.6 290.5L-4209.3 905.0M1610.2 290.5L-4072.6 905.0M1612.8 290.5L-3936.0 905.0M1615.4 290.5L-3799.6 905.0M1618.0 290.5L-3663.3 905.0M1620.6 290.5L-3527.2 905.0M1623.2 290.5L-3391.2 905.0M1625.8 290.5L-3255.4 905.0M1628.4 290.5L-3119.7 905.0M1631.0 290.5L-2984.2 905.0M1633.6 290.5L-2848.8 905.0M1636.2 290.5L-2713.5 905.0M1638.8 290.5L-2578.5 905.0M1641.4 290.5L-2443.5 905.0M1644.0 290.5L-2308.8 905.0M1646.5 290.5L-2174.1 905.0M1649.1 290.5L-2039.6 905.0M1651.7 290.5L-1905.3 905.0M1654.3 290.5L-1771.1 905.0M1656.8 290.5L-1637.1 905.0M1659.4 290.5L-1503.2 905.0M1662.0 290.5L-1369.4 905.0M1664.5 290.5L-1235.8 905.0M1667.1 290.5L-1102.4 905.0M1669.6 290.5L-969.1 905.0M1672.2 290.5L-835.9 905.0M1674.7 290.5L-702.9 905.0M1677.3 290.5L-570.0 905.0M1679.8 290.5L-437.3 905.0M1682.3 290.5L-304.7 905.0M1684.9 290.5L-172.3 905.0M1687.4 290.5L-40.0 905.0M1690.0 290.5L92.1 905.0M1692.5 290.5L224.1 905.0M1695.0 290.5L356.0 905.0M1697.5 290.5L487.7 905.0M1700.0 290.5L619.3 905.0M1702.6 290.5L750.7 905.0M1705.1 290.5L882.0 905.0M1707.6 290.5L1013.1 905.0M1710.1 290.5L1144.1 905.0M1712.6 290.5L1274.9 905.0M1715.1 290.5L1405.7 905.0M1717.6 290.5L1536.2 905.0M960.0 312.7L1600.0 331.5M960.0 313.1L1600.0 332.1M960.0 313.5L1600.0 332.7M960.0 313.9L1600.0 333.4M960.0 314.3L1600.0 334.0M960.0 314.7L1600.0 334.6M960.0 315.2L1600.0 335.3M960.0 315.7L1600.0 336.0M960.0 316.1L1600.0 336.7M960.0 316.6L1600.0 337.4M960.0 317.1L1600.0 338.1M960.0 317.6L1600.0 338.8M960.0 318.1L1600.0 339.6M960.0 318.6L1600.0 340.4M960.0 319.2L1600.0 341.2M960.0 319.7L1600.0 342.0M960.0 320.3L1600.0 342.9M960.0 320.9L1600.0 343.7M960.0 321.5L1600.0 344.6M960.0 322.1L1600.0 345.5M960.0 322.8L1600.0 346.5M960.0 323.4L1600.0 347.5M960.0 324.1L1600.0 348.5M960.0 324.8L1600.0 349.5M960.0 325.5L1600.0 350.5M960.0 326.3L1600.0 351.6M960.0 327.0L1600.0 352.8M960.0 327.8L1600.0 353.9M960.0 328.6L1600.0 355.1M960.0 329.4L1600.0 356.3M960.0 330.3L1600.0 357.6M960.0 331.2L1600.0 358.9M960.0 332.1L1600.0 360.3M960.0 333.1L1600.0 361.7M960.0 334.1L1600.0 363.1M960.0 335.1L1600.0 364.6M960.0 336.1L1600.0 366.2M960.0 337.2L1600.0 367.8M960.0 338.4L1600.0 369.5M960.0 339.5L1600.0 371.2M960.0 340.8L1600.0 373.1M960.0 342.0L1600.0 374.9M960.0 343.4L1600.0 376.9M960.0 344.7L1600.0 378.9M960.0 346.2L1600.0 381.1M960.0 347.7L1600.0 383.3M960.0 349.3L1600.0 385.6M960.0 350.9L1600.0 388.0M960.0 352.6L1600.0 390.5M960.0 354.4L1600.0 393.2M960.0 356.3L1600.0 396.0M960.0 358.3L1600.0 398.9M960.0 360.3L1600.0 401.9M960.0 362.5L1600.0 405.2M960.0 364.8L1600.0 408.6M960.0 367.2L1600.0 412.1M960.0 369.8L1600.0 415.9M960.0 372.5L1600.0 419.9M960.0 375.4L1600.0 424.2M960.0 378.4L1600.0 428.7M960.0 381.7L1600.0 433.5M960.0 385.1L1600.0 438.6M960.0 388.8L1600.0 444.0M960.0 392.8L1600.0 449.9M960.0 397.0L1600.0 456.2M960.0 401.6L1600.0 462.9M960.0 406.5L1600.0 470.2M960.0 411.9L1600.0 478.0M960.0 417.6L1600.0 486.6M960.0 423.9L1600.0 495.9M960.0 430.8L1600.0 506.1M960.0 438.4L1600.0 517.2M960.0 446.7L1600.0 529.6M960.0 456.0L1600.0 543.2M960.0 466.3L1600.0 558.5M960.0 477.9L1600.0 575.6M960.0 491.0L1600.0 594.9M960.0 505.9L1600.0 616.9M960.0 523.0L1600.0 642.2M960.0 542.9L1600.0 671.6M960.0 566.3L1600.0 706.1M960.0 594.2L1600.0 747.3M960.0 628.0L1600.0 797.2M960.0 669.9L1600.0 859.1M960.0 723.1L1600.0 937.7M960.0 793.0L1600.0 1040.9" stroke="#a0a0a0" stroke-width="1.2" fill="none"/>
<defs>
<linearGradient id="mHead" x1="1262" y1="205" x2="1332" y2="218" gradientUnits="userSpaceOnUse"><stop offset="0" stop-color="#39393b"/><stop offset="0.3" stop-color="#4a4a4c"/><stop offset="0.55" stop-color="#38383a"/><stop offset="1" stop-color="#2a2a2c"/></linearGradient>
<linearGradient id="mChest" x1="0" y1="255" x2="0" y2="410" gradientUnits="userSpaceOnUse"><stop offset="0" stop-color="#575759"/><stop offset="0.5" stop-color="#545456"/><stop offset="0.62" stop-color="#4a4a4c"/><stop offset="0.8" stop-color="#434345"/><stop offset="1" stop-color="#3b3b3d"/></linearGradient>
<linearGradient id="mArmL" x1="1205" y1="300" x2="1240" y2="325" gradientUnits="userSpaceOnUse"><stop offset="0" stop-color="#5e5e60"/><stop offset="0.5" stop-color="#505052"/><stop offset="1" stop-color="#39393b"/></linearGradient>
<linearGradient id="mFArmL" x1="1140" y1="385" x2="1165" y2="410" gradientUnits="userSpaceOnUse"><stop offset="0" stop-color="#5a5a5c"/><stop offset="0.5" stop-color="#4c4c4e"/><stop offset="1" stop-color="#38383a"/></linearGradient>
<linearGradient id="mArmR" x1="1375" y1="330" x2="1425" y2="295" gradientUnits="userSpaceOnUse"><stop offset="0" stop-color="#3e3e40"/><stop offset="0.45" stop-color="#565658"/><stop offset="1" stop-color="#5e5e60"/></linearGradient>
<linearGradient id="mFArmR" x1="1420" y1="0" x2="1468" y2="0" gradientUnits="userSpaceOnUse"><stop offset="0" stop-color="#48484a"/><stop offset="0.5" stop-color="#58585a"/><stop offset="1" stop-color="#4a4a4c"/></linearGradient>
<linearGradient id="mThighL" x1="1200" y1="540" x2="1285" y2="570" gradientUnits="userSpaceOnUse"><stop offset="0" stop-color="#4e4e50"/><stop offset="0.25" stop-color="#464648"/><stop offset="0.55" stop-color="#3c3c3e"/><stop offset="0.8" stop-color="#2e2e30"/><stop offset="1" stop-color="#28282a"/></linearGradient>
<linearGradient id="mThighR" x1="1292" y1="0" x2="1370" y2="0" gradientUnits="userSpaceOnUse"><stop offset="0" stop-color="#2c2c2e"/><stop offset="0.3" stop-color="#414143"/><stop offset="0.55" stop-color="#48484a"/><stop offset="0.8" stop-color="#434345"/><stop offset="1" stop-color="#39393b"/></linearGradient>
<linearGradient id="mShinL" x1="1205" y1="0" x2="1265" y2="0" gradientUnits="userSpaceOnUse"><stop offset="0" stop-color="#353537"/><stop offset="0.5" stop-color="#2a2a2c"/><stop offset="1" stop-color="#3a3a3c"/></linearGradient>
<linearGradient id="mShinR" x1="1305" y1="690" x2="1368" y2="680" gradientUnits="userSpaceOnUse"><stop offset="0" stop-color="#2c2c2e"/><stop offset="0.6" stop-color="#404042"/><stop offset="1" stop-color="#353537"/></linearGradient>
<linearGradient id="mAbd" x1="1250" y1="0" x2="1358" y2="0" gradientUnits="userSpaceOnUse"><stop offset="0" stop-color="#38383a"/><stop offset="0.6" stop-color="#323234"/><stop offset="0.7" stop-color="#3a3a3c"/><stop offset="1" stop-color="#353537"/></linearGradient>
</defs>
<g fill="rgba(0,0,0,0.49)" fill-rule="evenodd">
<path d="M1186.0 747.0C1186.0 747.0 1184.3 751.2 1190.0 751.0C1195.7 750.8 1210.0 747.7 1220.0 746.0C1230.0 744.3 1240.2 742.0 1250.0 741.0C1259.8 740.0 1269.0 740.8 1279.0 740.0C1289.0 739.2 1300.3 738.2 1310.0 736.0C1319.7 733.8 1337.0 727.0 1337.0 727.0C1337.0 727.0 1342.0 740.0 1342.0 740.0C1342.0 740.0 1336.0 700.0 1336.0 700.0C1336.0 700.0 1332.7 696.2 1330.0 697.0C1327.3 697.8 1324.2 702.2 1320.0 705.0C1315.8 707.8 1310.0 712.3 1305.0 714.0C1300.0 715.7 1296.7 714.7 1290.0 715.0C1283.3 715.3 1265.0 716.0 1265.0 716.0C1265.0 716.0 1251.3 723.3 1240.0 728.0C1228.7 732.7 1206.0 740.8 1197.0 744.0C1188.0 747.2 1186.0 747.0 1186.0 747.0Z M1256.0 661.0C1256.0 661.0 1277.3 656.3 1285.0 655.0C1292.7 653.7 1302.0 653.0 1302.0 653.0C1302.0 653.0 1308.0 664.0 1308.0 664.0C1308.0 664.0 1258.0 666.0 1258.0 666.0C1258.0 666.0 1256.0 661.0 1256.0 661.0Z M1338.0 648.0C1338.0 648.0 1342.3 643.5 1347.5 642.0C1352.7 640.5 1361.2 640.3 1369.0 639.0C1376.8 637.7 1386.6 635.3 1394.0 634.3C1401.4 633.3 1409.4 632.7 1413.6 632.9C1417.8 633.1 1415.2 634.6 1419.4 635.3C1423.6 636.0 1432.8 636.6 1439.0 637.2C1445.2 637.9 1451.2 639.4 1456.4 639.2C1461.6 639.0 1465.1 636.2 1470.0 636.2C1474.9 636.2 1482.0 637.9 1485.6 639.2C1489.2 640.5 1488.2 642.4 1491.4 644.0C1494.6 645.6 1501.1 647.9 1505.0 649.0C1508.9 650.1 1511.5 649.5 1514.7 650.8C1517.9 652.1 1521.2 654.1 1524.4 656.7C1527.7 659.3 1531.0 663.2 1534.2 666.4C1537.5 669.6 1540.7 672.9 1543.9 676.1C1547.1 679.3 1551.7 683.5 1553.6 685.8C1555.5 688.1 1555.5 689.7 1555.5 689.7C1555.5 689.7 1551.7 692.6 1551.7 692.6C1551.7 692.6 1556.7 694.7 1557.5 696.5C1558.3 698.3 1557.8 699.5 1556.5 703.3C1555.2 707.0 1552.1 714.5 1549.7 719.0C1547.3 723.5 1543.7 728.0 1541.9 730.6C1540.1 733.2 1539.0 734.4 1539.0 734.4C1539.0 734.4 1536.0 742.8 1534.2 746.1C1532.4 749.4 1531.5 751.4 1528.3 754.0C1525.0 756.6 1518.6 760.3 1514.7 761.7C1510.8 763.1 1507.9 762.8 1505.0 762.6C1502.1 762.4 1500.1 761.7 1497.2 760.7C1494.3 759.7 1487.5 756.8 1487.5 756.8C1487.5 756.8 1494.3 743.0 1499.2 738.3C1504.1 733.6 1512.5 730.9 1516.7 728.6C1520.9 726.3 1524.4 724.7 1524.4 724.7C1524.4 724.7 1524.6 708.5 1524.4 703.3C1524.2 698.1 1524.8 696.2 1523.5 693.6C1522.2 691.0 1521.4 691.2 1516.7 687.8C1512.0 684.4 1500.5 674.8 1495.3 673.2C1490.1 671.6 1490.5 675.7 1485.6 678.1C1480.7 680.5 1470.5 685.2 1466.1 687.8C1461.7 690.4 1460.6 691.3 1459.3 693.6C1458.0 695.9 1459.1 698.5 1458.3 701.4C1457.5 704.3 1457.6 706.2 1454.4 711.1C1451.2 716.0 1444.1 725.4 1438.9 730.6C1433.7 735.8 1428.2 739.5 1423.3 742.2C1418.4 745.0 1412.3 745.1 1409.7 747.1C1407.1 749.1 1410.4 751.7 1407.8 754.0C1405.2 756.3 1399.1 756.8 1394.2 760.7C1389.3 764.6 1382.0 773.7 1378.6 777.2C1375.2 780.8 1374.0 782.0 1374.0 782.0C1374.0 782.0 1360.0 742.0 1360.0 742.0C1360.0 742.0 1357.0 700.0 1357.0 700.0C1357.0 700.0 1350.0 665.0 1350.0 665.0C1350.0 665.0 1338.0 648.0 1338.0 648.0Z M1368.0 657.6C1368.0 657.6 1394.2 654.7 1394.2 654.7C1394.2 654.7 1390.6 664.4 1386.4 668.3C1382.2 672.2 1369.0 678.0 1369.0 678.0C1369.0 678.0 1368.0 657.6 1368.0 657.6Z"/>
</g>
<path d="M1250.0 258.0C1248.7 256.2 1242.3 259.3 1238.0 261.0C1233.7 262.7 1228.0 264.8 1224.0 268.0C1220.0 271.2 1216.5 275.5 1214.0 280.0C1211.5 284.5 1210.0 290.5 1209.0 295.0C1208.0 299.5 1209.8 302.0 1208.0 307.0C1206.2 312.0 1202.2 319.2 1198.0 325.0C1193.8 330.8 1187.5 337.2 1183.0 342.0C1178.5 346.8 1174.0 350.5 1171.0 354.0C1168.0 357.5 1164.3 359.8 1165.0 363.0C1165.7 366.2 1170.8 371.3 1175.0 373.0C1179.2 374.7 1185.7 372.5 1190.0 373.0C1194.3 373.5 1197.0 378.2 1201.0 376.0C1205.0 373.8 1209.5 365.7 1214.0 360.0C1218.5 354.3 1224.3 348.3 1228.0 342.0C1231.7 335.7 1234.0 329.8 1236.0 322.0C1238.0 314.2 1238.3 303.3 1240.0 295.0C1241.7 286.7 1244.3 278.2 1246.0 272.0C1247.7 265.8 1251.3 259.8 1250.0 258.0Z" fill="url(#mArmL)" />
<path d="M1167.0 359.0C1163.2 361.2 1161.7 364.5 1158.0 370.0C1154.3 375.5 1148.8 385.7 1145.0 392.0C1141.2 398.3 1138.2 403.2 1135.0 408.0C1131.8 412.8 1126.0 421.0 1126.0 421.0C1126.0 421.0 1131.0 426.3 1134.0 428.0C1137.0 429.7 1144.0 431.0 1144.0 431.0C1144.0 431.0 1153.3 421.7 1158.0 417.0C1162.7 412.3 1167.2 407.8 1172.0 403.0C1176.8 398.2 1181.8 392.7 1187.0 388.0C1192.2 383.3 1201.5 379.0 1203.0 375.0C1204.5 371.0 1199.7 367.0 1196.0 364.0C1192.3 361.0 1185.8 357.8 1181.0 357.0C1176.2 356.2 1170.8 356.8 1167.0 359.0Z" fill="url(#mFArmL)" />
<path d="M1177.0 356.0C1178.7 355.3 1180.3 363.8 1183.0 367.0C1185.7 370.2 1191.8 372.0 1193.0 375.0C1194.2 378.0 1192.2 383.7 1190.0 385.0C1187.8 386.3 1182.8 385.3 1180.0 383.0C1177.2 380.7 1173.5 375.5 1173.0 371.0C1172.5 366.5 1175.3 356.7 1177.0 356.0Z" fill="#323234" />
<path fill="#454547" d="M1127 420 L1121 428 L1102 440 L1082 455 L1064 465 L1066 470 L1086 463 L1101 457 L1097 470 L1103 472 L1113 460 L1124 448 L1141 437 L1145 430 Z"/>
<path d="M1364.0 271.0C1367.8 267.0 1377.0 265.5 1383.0 266.0C1389.0 266.5 1395.2 269.2 1400.0 274.0C1404.8 278.8 1407.7 286.8 1412.0 295.0C1416.3 303.2 1421.2 315.0 1426.0 323.0C1430.8 331.0 1436.2 338.2 1441.0 343.0C1445.8 347.8 1451.5 348.8 1455.0 352.0C1458.5 355.2 1460.0 357.8 1462.0 362.0C1464.0 366.2 1469.0 373.3 1467.0 377.0C1465.0 380.7 1456.5 383.3 1450.0 384.0C1443.5 384.7 1433.2 381.8 1428.0 381.0C1422.8 380.2 1422.7 380.7 1419.0 379.0C1415.3 377.3 1410.8 374.7 1406.0 371.0C1401.2 367.3 1395.7 363.3 1390.0 357.0C1384.3 350.7 1376.3 340.5 1372.0 333.0C1367.7 325.5 1366.0 319.2 1364.0 312.0C1362.0 304.8 1360.0 296.8 1360.0 290.0C1360.0 283.2 1360.2 275.0 1364.0 271.0Z" fill="url(#mArmR)" />
<path d="M1425.0 371.0C1429.2 368.7 1438.3 366.2 1445.0 367.0C1451.7 367.8 1461.0 372.8 1465.0 376.0C1469.0 379.2 1468.7 382.0 1469.0 386.0C1469.3 390.0 1468.2 395.3 1467.0 400.0C1465.8 404.7 1463.8 409.0 1462.0 414.0C1460.2 419.0 1458.0 424.8 1456.0 430.0C1454.0 435.2 1450.0 445.0 1450.0 445.0C1450.0 445.0 1440.8 443.2 1436.0 442.0C1431.2 440.8 1421.0 438.0 1421.0 438.0C1421.0 438.0 1419.3 428.7 1419.0 424.0C1418.7 419.3 1419.0 414.8 1419.0 410.0C1419.0 405.2 1418.8 399.8 1419.0 395.0C1419.2 390.2 1419.0 385.0 1420.0 381.0C1421.0 377.0 1420.8 373.3 1425.0 371.0Z" fill="url(#mFArmR)" />
<circle cx="1447" cy="361" r="10.5" fill="#4c4c4e" stroke="#39393b" stroke-width="1.5"/><circle cx="1449" cy="360" r="5" fill="#58585a"/>
<path d="M1421.0 437.0C1421.0 437.0 1450.0 444.0 1450.0 444.0C1450.0 444.0 1448.2 445.3 1447.5 448.0C1446.8 450.7 1448.4 456.3 1445.5 460.0C1442.6 463.7 1436.8 467.1 1430.0 470.0C1423.2 472.9 1412.5 475.6 1405.0 477.5C1397.5 479.4 1385.0 481.5 1385.0 481.5C1385.0 481.5 1385.3 478.1 1382.0 477.5C1378.7 476.9 1365.0 478.0 1365.0 478.0C1365.0 478.0 1363.5 473.5 1363.5 473.5C1363.5 473.5 1373.9 468.7 1380.0 466.0C1386.1 463.3 1393.3 460.6 1400.0 457.5C1406.7 454.4 1416.5 450.9 1420.0 447.5C1423.5 444.1 1421.0 437.0 1421.0 437.0Z" fill="#454547" />
<path d="M1251.0 470.0C1246.0 469.7 1244.0 481.7 1240.0 488.0C1236.0 494.3 1230.8 500.5 1227.0 508.0C1223.2 515.5 1219.8 523.5 1217.0 533.0C1214.2 542.5 1212.3 556.3 1210.0 565.0C1207.7 573.7 1205.3 577.5 1203.0 585.0C1200.7 592.5 1197.5 603.3 1196.0 610.0C1194.5 616.7 1193.2 620.3 1194.0 625.0C1194.8 629.7 1197.5 636.8 1201.0 638.0C1204.5 639.2 1209.8 634.3 1215.0 632.0C1220.2 629.7 1226.5 625.7 1232.0 624.0C1237.5 622.3 1243.3 624.0 1248.0 622.0C1252.7 620.0 1256.0 617.3 1260.0 612.0C1264.0 606.7 1267.8 597.8 1272.0 590.0C1276.2 582.2 1281.3 572.5 1285.0 565.0C1288.7 557.5 1293.5 552.8 1294.0 545.0C1294.5 537.2 1292.0 527.2 1288.0 518.0C1284.0 508.8 1276.2 498.0 1270.0 490.0C1263.8 482.0 1256.0 470.3 1251.0 470.0Z" fill="url(#mThighL)" />
<path d="M1201.0 636.0C1201.0 640.5 1208.0 648.7 1211.0 656.0C1214.0 663.3 1216.3 672.3 1219.0 680.0C1221.7 687.7 1224.5 696.5 1227.0 702.0C1229.5 707.5 1230.2 710.5 1234.0 713.0C1237.8 715.5 1245.2 717.0 1250.0 717.0C1254.8 717.0 1260.7 715.8 1263.0 713.0C1265.3 710.2 1264.5 704.5 1264.0 700.0C1263.5 695.5 1260.7 691.8 1260.0 686.0C1259.3 680.2 1260.3 671.8 1260.0 665.0C1259.7 658.2 1259.0 650.8 1258.0 645.0C1257.0 639.2 1256.2 634.0 1254.0 630.0C1251.8 626.0 1249.3 622.5 1245.0 621.0C1240.7 619.5 1233.7 619.7 1228.0 621.0C1222.3 622.3 1215.5 626.5 1211.0 629.0C1206.5 631.5 1201.0 631.5 1201.0 636.0Z" fill="url(#mShinL)" />
<ellipse cx="1230" cy="631" rx="11" ry="9" fill="#262628" transform="rotate(-20 1230 631)"/><ellipse cx="1232" cy="630" rx="6.5" ry="5" fill="#3c3c3e" transform="rotate(-20 1232 630)"/>
<path d="M1227.0 699.0C1223.0 697.5 1216.8 702.5 1212.0 704.0C1207.2 705.5 1202.0 706.0 1198.0 708.0C1194.0 710.0 1190.8 713.0 1188.0 716.0C1185.2 719.0 1182.0 722.3 1181.0 726.0C1180.0 729.7 1180.8 735.2 1182.0 738.0C1183.2 740.8 1185.5 742.0 1188.0 743.0C1190.5 744.0 1191.7 745.2 1197.0 744.0C1202.3 742.8 1212.8 738.7 1220.0 736.0C1227.2 733.3 1234.2 730.5 1240.0 728.0C1245.8 725.5 1251.0 723.5 1255.0 721.0C1259.0 718.5 1262.7 716.0 1264.0 713.0C1265.3 710.0 1265.3 703.2 1263.0 703.0C1260.7 702.8 1254.5 710.3 1250.0 712.0C1245.5 713.7 1239.8 715.2 1236.0 713.0C1232.2 710.8 1231.0 700.5 1227.0 699.0Z" fill="#4a4a4c" />
<path d="M1198 708 L1203 742" stroke="#3a3a3c" stroke-width="1" fill="none"/>
<path d="M1297.0 535.0C1295.0 541.7 1294.2 550.5 1293.0 560.0C1291.8 569.5 1290.2 582.8 1290.0 592.0C1289.8 601.2 1291.0 608.3 1292.0 615.0C1293.0 621.7 1294.7 626.5 1296.0 632.0C1297.3 637.5 1298.3 643.2 1300.0 648.0C1301.7 652.8 1302.7 660.0 1306.0 661.0C1309.3 662.0 1315.2 656.7 1320.0 654.0C1324.8 651.3 1330.7 646.5 1335.0 645.0C1339.3 643.5 1344.7 647.5 1346.0 645.0C1347.3 642.5 1342.3 636.7 1343.0 630.0C1343.7 623.3 1347.5 613.0 1350.0 605.0C1352.5 597.0 1355.7 590.3 1358.0 582.0C1360.3 573.7 1362.3 563.7 1364.0 555.0C1365.7 546.3 1367.0 539.2 1368.0 530.0C1369.0 520.8 1370.3 508.2 1370.0 500.0C1369.7 491.8 1369.7 483.7 1366.0 481.0C1362.3 478.3 1355.7 480.3 1348.0 484.0C1340.3 487.7 1327.2 497.0 1320.0 503.0C1312.8 509.0 1308.8 514.7 1305.0 520.0C1301.2 525.3 1299.0 528.3 1297.0 535.0Z" fill="url(#mThighR)" />
<path d="M1304.0 657.0C1304.0 662.0 1311.0 673.2 1315.0 680.0C1319.0 686.8 1324.5 692.0 1328.0 698.0C1331.5 704.0 1334.0 709.8 1336.0 716.0C1338.0 722.2 1339.0 728.7 1340.0 735.0C1341.0 741.3 1339.5 751.0 1342.0 754.0C1344.5 757.0 1350.7 754.5 1355.0 753.0C1359.3 751.5 1366.3 749.2 1368.0 745.0C1369.7 740.8 1365.3 734.7 1365.0 728.0C1364.7 721.3 1365.8 711.7 1366.0 705.0C1366.2 698.3 1366.5 694.2 1366.0 688.0C1365.5 681.8 1364.8 673.5 1363.0 668.0C1361.2 662.5 1358.0 658.8 1355.0 655.0C1352.0 651.2 1349.2 647.2 1345.0 645.0C1340.8 642.8 1335.0 641.2 1330.0 642.0C1325.0 642.8 1319.3 647.5 1315.0 650.0C1310.7 652.5 1304.0 652.0 1304.0 657.0Z" fill="url(#mShinR)" />
<ellipse cx="1337" cy="660" rx="10" ry="8" fill="#2a2a2c" transform="rotate(35 1337 660)"/>
<path d="M1339.0 751.0C1336.3 752.5 1335.2 759.8 1332.0 765.0C1328.8 770.2 1324.0 776.7 1320.0 782.0C1316.0 787.3 1310.8 792.8 1308.0 797.0C1305.2 801.2 1303.3 804.0 1303.0 807.0C1302.7 810.0 1303.8 812.8 1306.0 815.0C1308.2 817.2 1312.0 819.0 1316.0 820.0C1320.0 821.0 1325.2 821.7 1330.0 821.0C1334.8 820.3 1340.8 818.7 1345.0 816.0C1349.2 813.3 1351.7 809.3 1355.0 805.0C1358.3 800.7 1362.0 795.0 1365.0 790.0C1368.0 785.0 1371.8 780.3 1373.0 775.0C1374.2 769.7 1372.8 763.7 1372.0 758.0C1371.2 752.3 1370.3 742.3 1368.0 741.0C1365.7 739.7 1361.3 747.5 1358.0 750.0C1354.7 752.5 1351.2 755.8 1348.0 756.0C1344.8 756.2 1341.7 749.5 1339.0 751.0Z" fill="#4e4e50" />
<path d="M1310 796 L1346 810" stroke="#3a3a3c" stroke-width="1" fill="none"/><path d="M1367 742 L1373 775 L1345 816 L1356 790 L1362 760Z" fill="#444446"/>
<path d="M1250.0 262.0C1231.2 267.0 1235.0 276.2 1232.0 290.0C1229.0 303.8 1229.7 326.7 1232.0 345.0C1234.3 363.3 1242.7 379.2 1246.0 400.0C1249.3 420.8 1243.0 455.0 1252.0 470.0C1261.0 485.0 1281.7 489.7 1300.0 490.0C1318.3 490.3 1353.0 483.7 1362.0 472.0C1371.0 460.3 1352.7 438.7 1354.0 420.0C1355.3 401.3 1368.3 381.7 1370.0 360.0C1371.7 338.3 1368.2 306.7 1364.0 290.0C1359.8 273.3 1364.0 264.7 1345.0 260.0C1326.0 255.3 1268.8 257.0 1250.0 262.0Z" fill="#3a3a3c" />
<path d="M1251.0 474.0C1251.0 474.0 1260.2 490.7 1265.0 500.0C1269.8 509.3 1275.5 523.2 1280.0 530.0C1284.5 536.8 1288.7 540.0 1292.0 541.0C1295.3 542.0 1297.0 540.2 1300.0 536.0C1303.0 531.8 1303.3 523.3 1310.0 516.0C1316.7 508.7 1331.2 498.7 1340.0 492.0C1348.8 485.3 1363.0 476.0 1363.0 476.0C1363.0 476.0 1340.5 477.0 1330.0 478.0C1319.5 479.0 1310.0 482.0 1300.0 482.0C1290.0 482.0 1278.2 479.3 1270.0 478.0C1261.8 476.7 1251.0 474.0 1251.0 474.0Z" fill="#3d3d3f" />
<path d="M1251.0 458.0C1251.0 458.0 1261.5 465.0 1270.0 468.0C1278.5 471.0 1291.2 476.0 1302.0 476.0C1312.8 476.0 1325.8 471.3 1335.0 468.0C1344.2 464.7 1357.0 456.0 1357.0 456.0C1357.0 456.0 1363.0 475.0 1363.0 475.0C1363.0 475.0 1345.2 483.7 1335.0 486.0C1324.8 488.3 1312.8 489.3 1302.0 489.0C1291.2 488.7 1278.5 486.2 1270.0 484.0C1261.5 481.8 1251.0 476.0 1251.0 476.0C1251.0 476.0 1251.0 458.0 1251.0 458.0Z" fill="#474749" />
<path d="M1246.0 398.0C1246.0 398.0 1249.2 413.0 1250.0 420.0C1250.8 427.0 1250.7 433.5 1251.0 440.0C1251.3 446.5 1252.0 459.0 1252.0 459.0C1252.0 459.0 1266.2 467.3 1275.0 470.0C1283.8 472.7 1295.0 475.3 1305.0 475.0C1315.0 474.7 1326.2 471.0 1335.0 468.0C1343.8 465.0 1358.0 457.0 1358.0 457.0C1358.0 457.0 1354.8 441.8 1354.0 435.0C1353.2 428.2 1353.0 416.0 1353.0 416.0C1353.0 416.0 1362.0 384.0 1362.0 384.0C1362.0 384.0 1300.0 370.0 1300.0 370.0C1300.0 370.0 1246.0 398.0 1246.0 398.0Z" fill="url(#mAbd)" />
<path d="M1272.0 254.0C1258.3 255.8 1255.7 255.7 1250.0 258.0C1244.3 260.3 1241.2 262.7 1238.0 268.0C1234.8 273.3 1232.3 281.3 1231.0 290.0C1229.7 298.7 1229.7 310.8 1230.0 320.0C1230.3 329.2 1231.3 336.7 1233.0 345.0C1234.7 353.3 1238.0 359.5 1240.0 370.0C1242.0 380.5 1245.0 408.0 1245.0 408.0C1245.0 408.0 1248.7 400.8 1252.0 397.0C1255.3 393.2 1260.3 387.7 1265.0 385.0C1269.7 382.3 1275.0 381.0 1280.0 381.0C1285.0 381.0 1290.0 382.3 1295.0 385.0C1300.0 387.7 1304.7 392.8 1310.0 397.0C1315.3 401.2 1320.0 406.7 1327.0 410.0C1334.0 413.3 1352.0 417.0 1352.0 417.0C1352.0 417.0 1356.7 395.5 1360.0 386.0C1363.3 376.5 1370.8 366.8 1372.0 360.0C1373.2 353.2 1368.2 350.8 1367.0 345.0C1365.8 339.2 1365.5 332.5 1365.0 325.0C1364.5 317.5 1364.0 307.5 1364.0 300.0C1364.0 292.5 1364.5 285.3 1365.0 280.0C1365.5 274.7 1370.2 271.3 1367.0 268.0C1363.8 264.7 1346.0 260.0 1346.0 260.0C1346.0 260.0 1332.0 247.0 1332.0 247.0C1332.0 247.0 1285.7 252.2 1272.0 254.0Z" fill="url(#mChest)" />
<path d="M1296.0 386.0C1298.3 388.0 1304.8 393.8 1310.0 398.0C1315.2 402.2 1320.2 407.7 1327.0 411.0C1333.8 414.3 1347.0 416.8 1351.0 418.0" fill="none" stroke="#5a5a5c" stroke-width="3"/>
<path d="M1240.0 350.0C1243.0 349.5 1252.2 348.3 1258.0 347.0C1263.8 345.7 1270.8 343.8 1275.0 342.0C1279.2 340.2 1281.2 336.0 1283.0 336.0C1284.8 336.0 1283.2 339.7 1286.0 342.0C1288.8 344.3 1292.7 348.3 1300.0 350.0C1307.3 351.7 1320.8 352.8 1330.0 352.0C1339.2 351.2 1349.2 347.7 1355.0 345.0C1360.8 342.3 1363.3 337.5 1365.0 336.0" fill="none" stroke="#464648" stroke-width="2.2" opacity=".8"/>
<path d="M1284 338 L1286 352" stroke="#454547" stroke-width="1.6" fill="none"/>
<path d="M1283.0 262.0C1283.0 262.0 1286.7 284.3 1290.0 290.0C1293.3 295.7 1298.0 295.8 1303.0 296.0C1308.0 296.2 1314.7 294.3 1320.0 291.0C1325.3 287.7 1330.7 281.0 1335.0 276.0C1339.3 271.0 1346.0 261.0 1346.0 261.0C1346.0 261.0 1342.3 255.5 1340.0 253.0C1337.7 250.5 1332.0 246.0 1332.0 246.0C1332.0 246.0 1333.2 252.3 1325.0 255.0C1316.8 257.7 1283.0 262.0 1283.0 262.0Z" fill="#2b2b2d" />
<path d="M1295.0 168.0C1289.2 168.0 1282.8 169.7 1278.0 173.0C1273.2 176.3 1268.9 181.8 1266.0 188.0C1263.1 194.2 1261.0 202.7 1260.5 210.0C1260.0 217.3 1261.2 224.3 1263.0 232.0C1264.8 239.7 1268.0 248.2 1271.0 256.0C1274.0 263.8 1277.7 273.0 1281.0 279.0C1284.3 285.0 1287.5 289.3 1291.0 292.0C1294.5 294.7 1298.0 295.5 1302.0 295.0C1306.0 294.5 1311.0 292.5 1315.0 289.0C1319.0 285.5 1323.3 280.2 1326.0 274.0C1328.7 267.8 1330.2 260.2 1331.0 252.0C1331.8 243.8 1331.2 232.8 1331.0 225.0C1330.8 217.2 1331.0 211.5 1330.0 205.0C1329.0 198.5 1327.8 191.3 1325.0 186.0C1322.2 180.7 1318.0 176.0 1313.0 173.0C1308.0 170.0 1300.8 168.0 1295.0 168.0Z" fill="url(#mHead)" />
</svg>
<svg class="abs" style="left:9px;top:628px" width="22" height="140" viewBox="969 726 22 140" fill="#ababab" stroke="none">
<!-- skull -->
<path d="M978.5 729c-4.3 0-7.5 3-7.5 7 0 2.3 1 4 2.5 5.200v3.300c0 .8.600 1.400 1.400 1.400h7.200c.8 0 1.400-.6 1.400-1.400v-3.300c1.500-1.200 2.500-2.900 2.500-5.200 0-4-3.200-7-7.500-7z"/>
<circle cx="975.6" cy="737.2" r="1.9" fill="#cfcfcf"/><circle cx="981.4" cy="737.2" r="1.9" fill="#cfcfcf"/><path d="M978.5 739.800l-1.200 2.200h2.400z" fill="#cfcfcf"/>
<!-- undo -->
<path d="M976 769.500a4.800 4.800 0 1 1-1.300 4.800" fill="none" stroke="#ababab" stroke-width="1.7"/><path d="M973.300 765.800l.5 5.200 5-1.500z"/>
<!-- move -->
<path d="M980 785l2.800 3.300h-2v2.900h2.900v-2l3.300 2.800-3.300 2.800v-2h-2.900v2.900h2l-2.800 3.300-2.800-3.300h2v-2.900h-2.900v2l-3.300-2.800 3.300-2.800v2h2.900v-2.900h-2z"/>
<!-- zoom -->
<circle cx="978.500" cy="812.500" r="3.700" fill="none" stroke="#ababab" stroke-width="1.800"/><path d="M981.300 815.300l4 4" stroke="#ababab" stroke-width="2.200" fill="none" stroke-linecap="round"/>
<!-- power -->
<path d="M976.300 830.800a5 5 0 1 0 6.400 0" fill="none" stroke="#ababab" stroke-width="1.700"/><path d="M979.500 828v6" stroke="#ababab" stroke-width="1.700" fill="none"/>
<!-- camera -->
<path d="M974 850h7.500c.8 0 1.500.7 1.500 1.500v1.500l3.500-2.800c.3-.2.500 0 .5.300v9c0 .3-.2.500-.5.300l-3.500-2.800v1.500c0 .8-.7 1.500-1.500 1.500h-7.500c-.8 0-1.500-.7-1.500-1.500v-7c0-.8.700-1.500 1.500-1.500z"/>
</svg>

</div>
<div id="play">
  <div class="abs" style="left:14.5px;top:19.5px;width:4.5px;height:12px;background:#999"></div>
  <div class="abs" style="left:21.5px;top:19.5px;width:4.5px;height:12px;background:#999"></div>
  <div class="abs" style="left:39px;top:0;width:1px;height:51px;background:#e0e0e0"></div>
  <div class="abs" style="left:58px;top:19px;font-size:12px;line-height:14px;color:#777;white-space:nowrap;letter-spacing:.3px"><b style="color:#444;letter-spacing:-.2px">41</b> / 134</div>
  <div class="abs" style="left:120px;top:23.5px;width:509px;height:6px;border-radius:3px;background:#e3e3e0"></div>
  <div class="abs" style="left:273px;top:19.5px;width:14px;height:14px;border-radius:50%;background:#8f8f8f"></div>
  <div class="abs" style="left:639px;top:0;width:1px;height:51px;background:#e2e2e2"></div>

</div>
<div id="side">
  <div class="btn" style="top:10px;background:#fc9632;color:#fff">DOWNLOAD</div>
  <div class="btn" style="top:47px;background:#f2f2f2;color:#555;border:1px solid #d0d0d0">SEND TO AERO</div>
  <div class="btn" style="top:84px;background:#f2f2f2;color:#555;border:1px solid #d0d0d0">UPLOAD CHARACTER</div>
  <div class="abs" style="left:0;top:0;width:318px;height:1px;background:#e2e2e2"></div>
  <div class="abs" style="left:0;top:125px;width:318px;height:1px;background:#e4e4e4"></div>
  <div id="panel">
    <div class="abs" style="left:11px;top:11px;font-weight:bold;font-size:12px;line-height:14px;color:#222;letter-spacing:-.15px;white-space:nowrap">Hip Hop Dancing</div>
    <svg class="abs" style="left:276px;top:11px" width="12" height="12" viewBox="0 0 12 12"><path d="M1.5 1.5L10.5 10.5M10.5 1.5L1.5 10.5" stroke="#aaa" stroke-width="2.6" fill="none"/></svg>
    <div class="abs" style="left:0;top:32px;width:298px;height:1px;background:#e2e2e2"></div>
    <div class="row" style="top:46px">Range<b>50</b></div>
    <div class="track" style="top:66px"></div><div class="knob" style="left:142px;top:62.5px"></div>
    <div class="row" style="top:91px">Overdrive<b>50</b></div>
    <div class="track" style="top:111px"></div><div class="knob" style="left:142px;top:107.5px"></div>
    <div class="row" style="top:136px">Character Arm-Space<b>50</b></div>
    <div class="track" style="top:156px"></div><div class="knob" style="left:142px;top:152.5px"></div>
    <div class="row" style="top:181px">Trim <span style="font-size:9.5px;color:#aaa;letter-spacing:.45px;margin-left:2px">135 total frames</span></div>
    <div class="track" style="top:201px"></div><div class="abs" style="left:83px;top:201px;width:132px;height:6px;background:#c1c1c1"></div>
    <div class="knob" style="left:76px;top:197.5px"></div><div class="knob" style="left:208px;top:197.5px"></div>
    <div class="row" style="top:219px;left:13px;width:274px">0<b>100</b></div>
    <div class="abs" style="left:11px;top:249px;width:13px;height:13px;border:1.5px solid #767680;border-radius:2.5px;background:#fff"></div>
    <div class="row" style="top:249px;left:28px;letter-spacing:.7px">Mirror</div>

  </div>
</div>
</body>
</html>
